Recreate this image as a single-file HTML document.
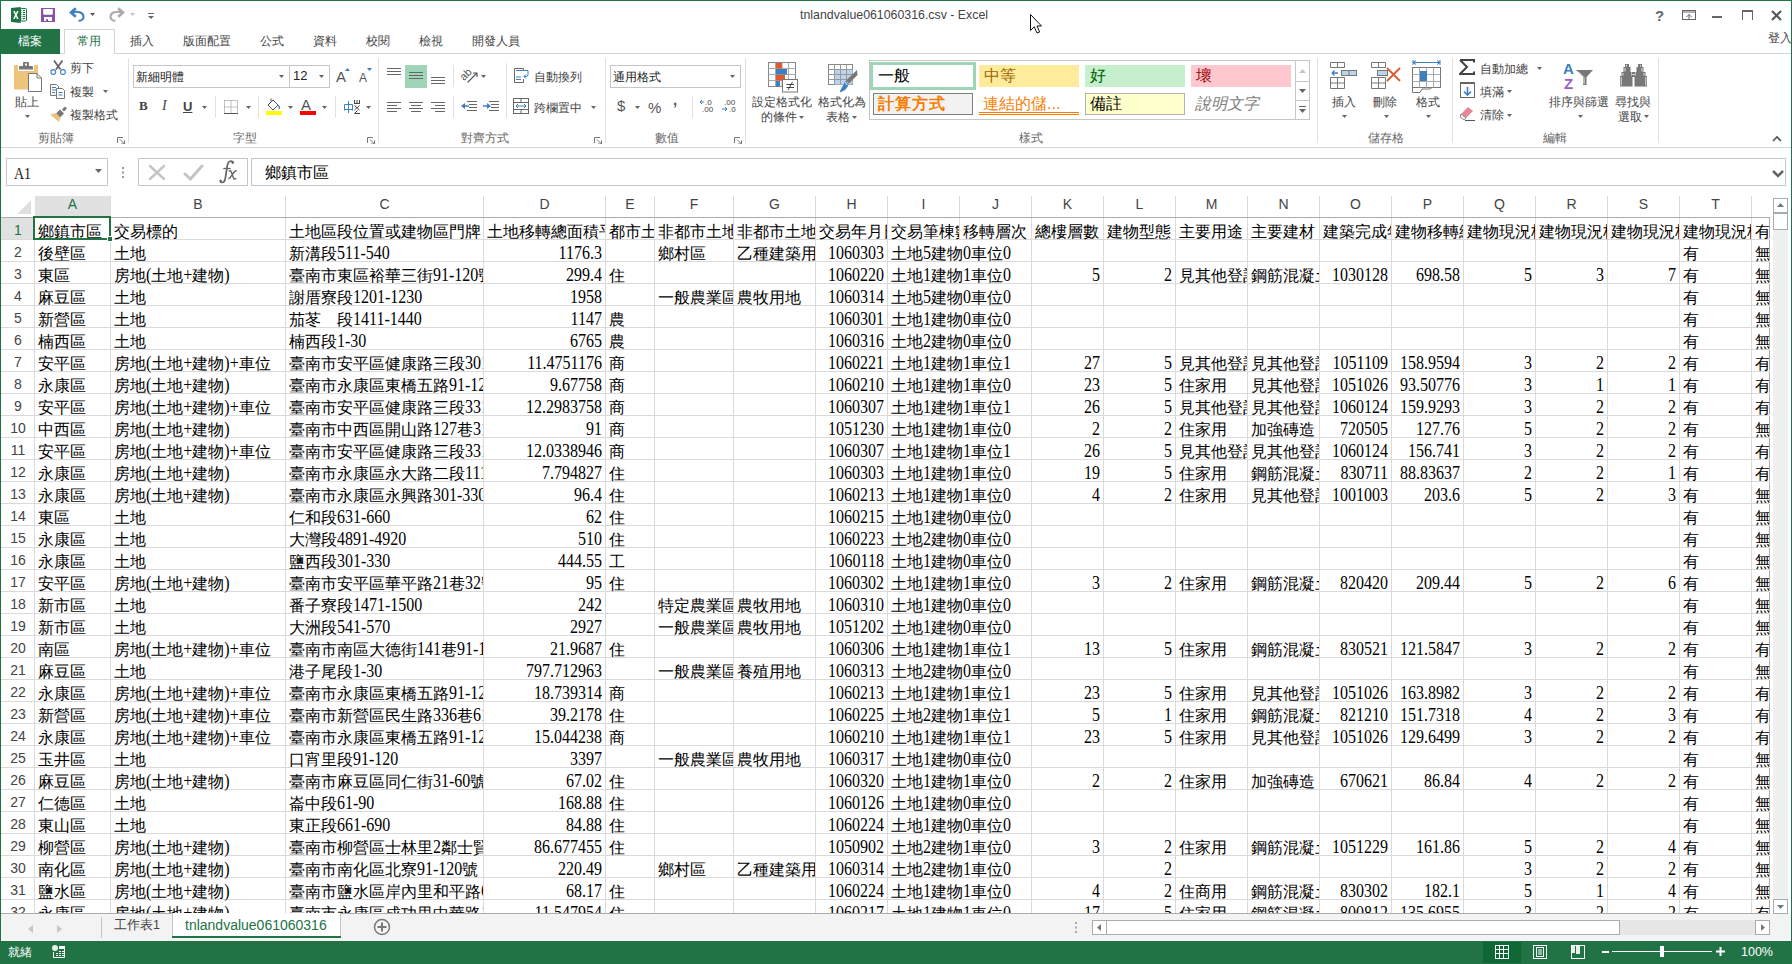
<!DOCTYPE html>
<html><head><meta charset="utf-8"><style>
*{margin:0;padding:0}
html,body{width:1792px;height:964px;overflow:hidden;background:#fff;position:relative;font-family:"Liberation Sans",sans-serif}
.t{position:absolute;white-space:nowrap;line-height:1.2}
.ch{position:absolute;top:194px;height:21px;line-height:21px;text-align:center;font-size:14px}
.rh{position:absolute;left:0;width:34px;height:21px;line-height:21px;text-align:center;font-size:14px}
.c{position:absolute;height:22px;line-height:22px;font-size:16px;font-family:"Liberation Serif",serif;white-space:nowrap;overflow:hidden;padding-left:3px;box-sizing:border-box;color:#000}
.n{text-align:right;padding-left:0}
.d{display:inline-block;transform:scaleY(1.15);transform-origin:0 15px}
.vl{position:absolute;width:1px;height:21px;background:#dadada}
</style></head><body>
<svg style="position:absolute;left:11px;top:7px;" width="17" height="17" viewBox="0 0 17 17"><rect x="9.5" y="1.5" width="6" height="12.5" rx="0.8" fill="#fff" stroke="#217346" stroke-width="1"/><rect x="11.7" y="3.0" width="2.4" height="1.1" fill="#217346"/><rect x="9.5" y="3.0" width="1" height="1.1" fill="#217346"/><rect x="11.7" y="5.0" width="2.4" height="1.1" fill="#217346"/><rect x="9.5" y="5.0" width="1" height="1.1" fill="#217346"/><rect x="11.7" y="7.0" width="2.4" height="1.1" fill="#217346"/><rect x="9.5" y="7.0" width="1" height="1.1" fill="#217346"/><rect x="11.7" y="9.0" width="2.4" height="1.1" fill="#217346"/><rect x="9.5" y="9.0" width="1" height="1.1" fill="#217346"/><rect x="11.7" y="11.0" width="2.4" height="1.1" fill="#217346"/><rect x="9.5" y="11.0" width="1" height="1.1" fill="#217346"/><path d="M0 1L9.8 0V16L0 15Z" fill="#217346"/><path d="M2.2 4L4 8L2.2 12H3.8L4.9 9.6L6 12H7.6L5.8 8L7.6 4H6L4.9 6.4L3.8 4Z" fill="#fff"/></svg>
<svg style="position:absolute;left:41px;top:8px;" width="14" height="14" viewBox="0 0 14 14"><path d="M0 0H14V14H0Z" fill="#8651a8"/><path d="M2.2 1H11.8V5.8Q11.8 6.8 10.8 6.8H3.2Q2.2 6.8 2.2 5.8Z" fill="#fff"/><rect x="3" y="9" width="8" height="4" fill="#fff"/><rect x="5" y="11.2" width="2" height="1.8" fill="#8651a8"/></svg>
<svg style="position:absolute;left:68px;top:6px;" width="18" height="17" viewBox="0 0 18 17"><path d="M3.5 6.5C10 5 15 6 15.5 10.5C15.8 13.5 13 14.8 10.5 14.8" fill="none" stroke="#3d7fc1" stroke-width="2"/><path d="M7.8 2.3L3 6.5L7.8 10.7" fill="none" stroke="#3d7fc1" stroke-width="2.6"/></svg>
<svg style="position:absolute;left:90px;top:13px;" width="5" height="3" viewBox="0 0 5 3"><path d="M0 0H5L2.5 3Z" fill="#555"/></svg>
<svg style="position:absolute;left:108px;top:6px;" width="18" height="17" viewBox="0 0 18 17"><g transform="matrix(-1 0 0 1 18 0)"><path d="M3.5 6.5C10 5 15 6 15.5 10.5C15.8 13.5 13 14.8 10.5 14.8" fill="none" stroke="#aaa" stroke-width="2"/><path d="M7.8 2.3L3 6.5L7.8 10.7" fill="none" stroke="#aaa" stroke-width="2.6"/></g></svg>
<svg style="position:absolute;left:130px;top:13px;" width="5" height="3" viewBox="0 0 5 3"><path d="M0 0H5L2.5 3Z" fill="#c5c5c5"/></svg>
<svg style="position:absolute;left:148px;top:13px;" width="6" height="6" viewBox="0 0 6 6"><path d="M0 0.5H6" stroke="#666"/><path d="M0 3H6L3 6Z" fill="#666"/></svg>
<div class="t" style="left:800px;top:8px;font-size:12.35px;color:#444;">tnlandvalue061060316.csv - Excel</div>
<svg style="position:absolute;left:1030px;top:14px;" width="13" height="21" viewBox="0 0 13 21"><path d="M0.5 0.5V16.5L4.2 12.8L7 19L9.6 18L7 12H11.5Z" fill="#fff" stroke="#111" stroke-width="1" stroke-linejoin="round"/></svg>
<div class="t" style="left:1655px;top:7px;font-size:15px;color:#666;font-weight:bold">?</div>
<svg style="position:absolute;left:1682px;top:10px;" width="14" height="10" viewBox="0 0 14 10"><rect x="0.5" y="0.5" width="13" height="9" fill="none" stroke="#666"/><path d="M0.5 2H13.5" stroke="#666"/><path d="M7 9V4.5M4.5 7L7 4.5L9.5 7" fill="none" stroke="#666"/></svg>
<div style="position:absolute;left:1712px;top:16px;width:10px;height:2px;background:#666"></div>
<svg style="position:absolute;left:1742px;top:10px;" width="11" height="10" viewBox="0 0 11 10"><rect x="0.5" y="0.5" width="10" height="10" fill="none" stroke="#666"/><rect x="0" y="0" width="11" height="2" fill="#666"/></svg>
<svg style="position:absolute;left:1771px;top:10px;" width="11" height="11" viewBox="0 0 11 11"><path d="M1 1L10 10M10 1L1 10" stroke="#555" stroke-width="2"/></svg>
<div class="t" style="left:1768px;top:31px;font-size:12px;color:#444;">登入</div>
<div style="position:absolute;left:1px;top:53px;width:1790px;height:1px;background:#d5d5d5"></div>
<div style="position:absolute;left:0px;top:29px;width:60px;height:25px;background:#217346"></div>
<div class="t" style="left:18px;top:34px;font-size:12px;color:#fff;">檔案</div>
<div style="position:absolute;left:64px;top:29px;width:51px;height:25px;background:#fff;border:1px solid #d5d5d5;border-bottom:none;box-sizing:border-box"></div>
<div class="t" style="left:77px;top:34px;font-size:12px;color:#217346;">常用</div>
<div class="t" style="left:130px;top:34px;font-size:12px;color:#444;">插入</div>
<div class="t" style="left:183px;top:34px;font-size:12px;color:#444;">版面配置</div>
<div class="t" style="left:260px;top:34px;font-size:12px;color:#444;">公式</div>
<div class="t" style="left:313px;top:34px;font-size:12px;color:#444;">資料</div>
<div class="t" style="left:366px;top:34px;font-size:12px;color:#444;">校閱</div>
<div class="t" style="left:419px;top:34px;font-size:12px;color:#444;">檢視</div>
<div class="t" style="left:472px;top:34px;font-size:12px;color:#444;">開發人員</div>
<svg style="position:absolute;left:13px;top:61px;" width="30" height="32" viewBox="0 0 30 32"><path d="M1 5Q1 4 2 4H25V28.5H2Q1 28.5 1 27.5Z" fill="#eec37a"/><rect x="5" y="4" width="16" height="6" fill="#fff"/><path d="M6 8.5V6Q6 5 7 5H10V2Q10 1 11 1H15Q16 1 16 2V5H19Q20 5 20 6V8.5Z" fill="#777"/><rect x="12" y="2.5" width="2" height="2" fill="#fff"/><path d="M15.5 12.5H24L28.5 17V30.5H15.5Z" fill="#fff" stroke="#777"/><path d="M24 12.5V17H28.5" fill="none" stroke="#777"/></svg>
<div class="t" style="left:15px;top:95px;font-size:12px;color:#444;">貼上</div>
<svg style="position:absolute;left:25px;top:115px;" width="5" height="3" viewBox="0 0 5 3"><path d="M0 0H5L2.5 3Z" fill="#666"/></svg>
<svg style="position:absolute;left:50px;top:60px;" width="16" height="16" viewBox="0 0 16 16"><path d="M4 0.5L10.5 9.5M12.5 0.5L6 9.5" stroke="#666" stroke-width="1.8"/><circle cx="3.3" cy="12" r="2.4" fill="#fff" stroke="#3d7fc1" stroke-width="1.1"/><circle cx="12.9" cy="12" r="2.4" fill="#fff" stroke="#3d7fc1" stroke-width="1.1"/></svg>
<div class="t" style="left:70px;top:61px;font-size:12px;color:#444;">剪下</div>
<svg style="position:absolute;left:50px;top:84px;" width="16" height="15" viewBox="0 0 16 15"><path d="M0.5 0.5H6.5L8.5 2.5V11.5H0.5Z" fill="#fff" stroke="#777"/><path d="M6.5 4.5H12.5L14.5 6.5V14.5H6.5Z" fill="#fff" stroke="#777"/><path d="M2 3.5H6M2 6H6M2 8.5H5M8.5 8.5H12.5M8.5 11H12.5" stroke="#3d7fc1"/></svg>
<div class="t" style="left:70px;top:85px;font-size:12px;color:#444;">複製</div>
<svg style="position:absolute;left:103px;top:90px;" width="5" height="3" viewBox="0 0 5 3"><path d="M0 0H5L2.5 3Z" fill="#666"/></svg>
<svg style="position:absolute;left:50px;top:106px;" width="17" height="16" viewBox="0 0 17 16"><path d="M12 3.5L15 0.5L17 2.5L14 5.5Z" fill="#777"/><path d="M6 7.5L10 3.5L14 7.5L10 11.5Z" fill="#777"/><path d="M0 8.5L6 7L10.5 11.5L9 16Z" fill="#e9c27f"/></svg>
<div class="t" style="left:70px;top:108px;font-size:12px;color:#444;">複製格式</div>
<div class="t" style="left:38px;top:131px;font-size:12px;color:#666;">剪貼簿</div>
<svg style="position:absolute;left:117px;top:137px;" width="8" height="7" viewBox="0 0 8 7"><path d="M0.5 6V0.5H6" fill="none" stroke="#777"/><path d="M3 2.5L7.5 7M7.5 3.5V7H4" fill="none" stroke="#777"/></svg>
<div style="position:absolute;left:128px;top:58px;width:1px;height:85px;background:#e1e1e1"></div>
<div style="position:absolute;left:133px;top:65px;width:157px;height:23px;border:1px solid #c6c6c6;box-sizing:border-box;background:#fff"></div>
<div style="position:absolute;left:289px;top:65px;width:41px;height:23px;border:1px solid #c6c6c6;box-sizing:border-box;background:#fff"></div>
<div class="t" style="left:136px;top:70px;font-size:12px;color:#222;">新細明體</div>
<svg style="position:absolute;left:279px;top:75px;" width="5" height="3" viewBox="0 0 5 3"><path d="M0 0H5L2.5 3Z" fill="#666"/></svg>
<div class="t" style="left:293px;top:68px;font-size:13px;color:#222;">12</div>
<svg style="position:absolute;left:319px;top:75px;" width="5" height="3" viewBox="0 0 5 3"><path d="M0 0H5L2.5 3Z" fill="#666"/></svg>
<svg style="position:absolute;left:336px;top:68px;" width="14" height="15" viewBox="0 0 14 15"><text x="0" y="14" font-family="Liberation Sans" font-size="15" fill="#555">A</text><path d="M9 3H14L11.5 0Z" fill="#3d7fc1"/></svg>
<svg style="position:absolute;left:359px;top:68px;" width="13" height="15" viewBox="0 0 13 15"><text x="0" y="14" font-family="Liberation Sans" font-size="12" fill="#555">A</text><path d="M8 0H13L10.5 3Z" fill="#3d7fc1"/></svg>
<div class="t" style="left:139px;top:98px;font-size:13px;color:#444;font-weight:bold;font-family:Liberation Serif">B</div>
<div class="t" style="left:162px;top:98px;font-size:14px;color:#444;font-style:italic;font-family:Liberation Serif">I</div>
<div class="t" style="left:183px;top:99px;font-size:13px;color:#444;font-weight:bold;text-decoration:underline">U</div>
<svg style="position:absolute;left:202px;top:106px;" width="5" height="3" viewBox="0 0 5 3"><path d="M0 0H5L2.5 3Z" fill="#666"/></svg>
<div style="position:absolute;left:215px;top:96px;width:1px;height:22px;background:#e1e1e1"></div>
<svg style="position:absolute;left:224px;top:100px;" width="14" height="14" viewBox="0 0 14 14"><path d="M0.5 0.5H13.5V13.5M0.5 0.5V13.5M7 0.5V13.5M0.5 7H13.5" stroke="#888" stroke-dasharray="1 1" fill="none"/><path d="M0 13.5H14" stroke="#555"/></svg>
<svg style="position:absolute;left:246px;top:106px;" width="5" height="3" viewBox="0 0 5 3"><path d="M0 0H5L2.5 3Z" fill="#666"/></svg>
<div style="position:absolute;left:258px;top:96px;width:1px;height:22px;background:#e1e1e1"></div>
<svg style="position:absolute;left:265px;top:98px;" width="18" height="18" viewBox="0 0 18 18"><path d="M3 7L8 2L13 7L8 12Z" fill="#fff" stroke="#555"/><path d="M6 3.5V0.5" stroke="#555"/><path d="M13 7Q16 9 14 11" fill="#3d7fc1" stroke="#3d7fc1"/><rect x="1" y="13" width="16" height="4" fill="#ffff00"/></svg>
<svg style="position:absolute;left:288px;top:106px;" width="5" height="3" viewBox="0 0 5 3"><path d="M0 0H5L2.5 3Z" fill="#666"/></svg>
<svg style="position:absolute;left:299px;top:98px;" width="18" height="18" viewBox="0 0 18 18"><text x="2" y="12" font-family="Liberation Sans" font-size="15" fill="#555">A</text><rect x="1" y="13" width="16" height="4" fill="#ff0000"/></svg>
<svg style="position:absolute;left:322px;top:106px;" width="5" height="3" viewBox="0 0 5 3"><path d="M0 0H5L2.5 3Z" fill="#666"/></svg>
<div style="position:absolute;left:335px;top:96px;width:1px;height:22px;background:#e1e1e1"></div>
<svg style="position:absolute;left:343px;top:99px;" width="18" height="16" viewBox="0 0 18 16"><path d="M1.5 11.5V5.5H9.5V11.5M1.5 10.5H9.5M5.5 2V14" fill="none" stroke="#3d7fc1" stroke-width="1"/><path d="M11.5 1V4.5M14 1V4.5M16.5 1V4.5M11 4.5H17M11.5 6.5L16.5 11M16.5 6.5L11.5 11M14.5 11.5L11.5 14.5H17" fill="none" stroke="#444" stroke-width="1"/></svg>
<svg style="position:absolute;left:366px;top:106px;" width="5" height="3" viewBox="0 0 5 3"><path d="M0 0H5L2.5 3Z" fill="#666"/></svg>
<div class="t" style="left:233px;top:131px;font-size:12px;color:#666;">字型</div>
<svg style="position:absolute;left:367px;top:137px;" width="8" height="7" viewBox="0 0 8 7"><path d="M0.5 6V0.5H6" fill="none" stroke="#777"/><path d="M3 2.5L7.5 7M7.5 3.5V7H4" fill="none" stroke="#777"/></svg>
<div style="position:absolute;left:378px;top:58px;width:1px;height:85px;background:#e1e1e1"></div>
<div style="position:absolute;left:387px;top:68px;width:14px;height:1px;background:#666"></div><div style="position:absolute;left:387px;top:71px;width:14px;height:1px;background:#666"></div><div style="position:absolute;left:387px;top:74px;width:14px;height:1px;background:#666"></div>
<div style="position:absolute;left:405px;top:65px;width:22px;height:23px;background:#9fd5b7"></div>
<div style="position:absolute;left:409px;top:72px;width:14px;height:1px;background:#666"></div><div style="position:absolute;left:409px;top:75px;width:14px;height:1px;background:#666"></div><div style="position:absolute;left:409px;top:78px;width:14px;height:1px;background:#666"></div>
<div style="position:absolute;left:431px;top:77px;width:14px;height:1px;background:#666"></div><div style="position:absolute;left:431px;top:80px;width:14px;height:1px;background:#666"></div><div style="position:absolute;left:431px;top:83px;width:14px;height:1px;background:#666"></div>
<div style="position:absolute;left:387px;top:102px;width:14px;height:1px;background:#666"></div><div style="position:absolute;left:387px;top:105px;width:10px;height:1px;background:#666"></div><div style="position:absolute;left:387px;top:108px;width:14px;height:1px;background:#666"></div><div style="position:absolute;left:387px;top:111px;width:10px;height:1px;background:#666"></div>
<div style="position:absolute;left:409px;top:102px;width:14px;height:1px;background:#666"></div><div style="position:absolute;left:411px;top:105px;width:10px;height:1px;background:#666"></div><div style="position:absolute;left:409px;top:108px;width:14px;height:1px;background:#666"></div><div style="position:absolute;left:411px;top:111px;width:10px;height:1px;background:#666"></div>
<div style="position:absolute;left:431px;top:102px;width:14px;height:1px;background:#666"></div><div style="position:absolute;left:435px;top:105px;width:10px;height:1px;background:#666"></div><div style="position:absolute;left:431px;top:108px;width:14px;height:1px;background:#666"></div><div style="position:absolute;left:435px;top:111px;width:10px;height:1px;background:#666"></div>
<div style="position:absolute;left:453px;top:65px;width:1px;height:22px;background:#e1e1e1"></div>
<div style="position:absolute;left:453px;top:96px;width:1px;height:22px;background:#e1e1e1"></div>
<svg style="position:absolute;left:460px;top:67px;" width="18" height="17" viewBox="0 0 18 17"><g transform="rotate(-45 6 8)"><text x="0" y="11" font-family="Liberation Sans" font-size="11" fill="#555">ab</text></g><path d="M7.5 15.5L16.5 6.5M13 6H17V10" fill="none" stroke="#555" stroke-width="1.1"/></svg>
<svg style="position:absolute;left:481px;top:75px;" width="5" height="3" viewBox="0 0 5 3"><path d="M0 0H5L2.5 3Z" fill="#666"/></svg>
<svg style="position:absolute;left:461px;top:101px;" width="16" height="11" viewBox="0 0 16 11"><path d="M6 0.5H16M8 3.5H16M8 6.5H16M6 9.5H16" stroke="#666"/><path d="M0 5L4 2V8Z" fill="#3d7fc1"/><path d="M3 5H8" stroke="#3d7fc1" stroke-width="1.5"/></svg>
<svg style="position:absolute;left:483px;top:101px;" width="16" height="11" viewBox="0 0 16 11"><path d="M6 0.5H16M8 3.5H16M8 6.5H16M6 9.5H16" stroke="#666"/><path d="M8 5L4 2V8Z" fill="#3d7fc1"/><path d="M0 5H5" stroke="#3d7fc1" stroke-width="1.5"/></svg>
<div style="position:absolute;left:506px;top:63px;width:1px;height:55px;background:#e1e1e1"></div>
<svg style="position:absolute;left:513px;top:67px;" width="18" height="17" viewBox="0 0 18 17"><path d="M10.5 3V1.5H1.5V15.5H10.5V12" fill="none" stroke="#666"/><path d="M3 3.5H15M3 10H8M3 12.5H8" stroke="#3d7fc1"/><path d="M15 3.5V7.5Q15 9.5 13 9.5H11M13 7.5L11 9.5L13 11.5" fill="none" stroke="#3d7fc1"/></svg>
<div class="t" style="left:534px;top:70px;font-size:12px;color:#444;">自動換列</div>
<svg style="position:absolute;left:513px;top:98px;" width="16" height="16" viewBox="0 0 16 16"><rect x="0.5" y="0.5" width="15" height="15" fill="#fff" stroke="#666"/><path d="M0.5 4.5H15.5M0.5 11.5H15.5M8 0.5V4.5M8 11.5V15.5" stroke="#666"/><path d="M3 8H13M3 8L5 6M3 8L5 10M13 8L11 6M13 8L11 10" stroke="#3d7fc1" fill="none"/></svg>
<div class="t" style="left:534px;top:101px;font-size:12px;color:#444;">跨欄置中</div>
<svg style="position:absolute;left:591px;top:106px;" width="5" height="3" viewBox="0 0 5 3"><path d="M0 0H5L2.5 3Z" fill="#666"/></svg>
<div class="t" style="left:461px;top:131px;font-size:12px;color:#666;">對齊方式</div>
<svg style="position:absolute;left:594px;top:137px;" width="8" height="7" viewBox="0 0 8 7"><path d="M0.5 6V0.5H6" fill="none" stroke="#777"/><path d="M3 2.5L7.5 7M7.5 3.5V7H4" fill="none" stroke="#777"/></svg>
<div style="position:absolute;left:605px;top:58px;width:1px;height:85px;background:#e1e1e1"></div>
<div style="position:absolute;left:610px;top:65px;width:131px;height:23px;border:1px solid #c6c6c6;box-sizing:border-box;background:#fff"></div>
<div class="t" style="left:613px;top:70px;font-size:12px;color:#222;">通用格式</div>
<svg style="position:absolute;left:730px;top:75px;" width="5" height="3" viewBox="0 0 5 3"><path d="M0 0H5L2.5 3Z" fill="#666"/></svg>
<div class="t" style="left:617px;top:97px;font-size:15px;color:#555;">$</div>
<svg style="position:absolute;left:635px;top:106px;" width="5" height="3" viewBox="0 0 5 3"><path d="M0 0H5L2.5 3Z" fill="#666"/></svg>
<div class="t" style="left:648px;top:99px;font-size:15px;color:#555;">%</div>
<div class="t" style="left:673px;top:91px;font-size:15px;color:#555;font-weight:bold">,</div>
<div style="position:absolute;left:692px;top:96px;width:1px;height:22px;background:#e1e1e1"></div>
<svg style="position:absolute;left:699px;top:99px;" width="16" height="14" viewBox="0 0 16 14"><text x="6" y="6" font-family="Liberation Sans" font-size="8" fill="#444">.0</text><text x="3" y="13" font-family="Liberation Sans" font-size="8" fill="#444">.00</text><path d="M1 3H5M1 3L3 1M1 3L3 5" stroke="#3d7fc1" fill="none"/></svg>
<svg style="position:absolute;left:721px;top:99px;" width="16" height="14" viewBox="0 0 16 14"><text x="3" y="6" font-family="Liberation Sans" font-size="8" fill="#444">.00</text><text x="8" y="13" font-family="Liberation Sans" font-size="8" fill="#444">.0</text><path d="M1 10H6M6 10L4 8M6 10L4 12" stroke="#3d7fc1" fill="none"/></svg>
<div class="t" style="left:655px;top:131px;font-size:12px;color:#666;">數值</div>
<svg style="position:absolute;left:734px;top:137px;" width="8" height="7" viewBox="0 0 8 7"><path d="M0.5 6V0.5H6" fill="none" stroke="#777"/><path d="M3 2.5L7.5 7M7.5 3.5V7H4" fill="none" stroke="#777"/></svg>
<div style="position:absolute;left:745px;top:58px;width:1px;height:85px;background:#e1e1e1"></div>
<svg style="position:absolute;left:768px;top:62px;" width="32" height="31" viewBox="0 0 32 31"><rect x="0.5" y="0.5" width="27" height="24" fill="#fff" stroke="#888"/><path d="M7.5 0.5V24.5M14 0.5V24.5M20.5 0.5V24.5M0.5 6.5H27.5M0.5 12.5H27.5M0.5 18.5H27.5" stroke="#aaa"/><rect x="8" y="1" width="6" height="5.5" fill="#e05a2c"/><rect x="8" y="7" width="11" height="5.5" fill="#3d7fc1"/><rect x="8" y="13" width="9" height="5.5" fill="#e05a2c"/><rect x="8" y="19" width="4" height="5.5" fill="#3d7fc1"/><rect x="14.5" y="17.5" width="15" height="12.5" fill="#fff" stroke="#777"/><path d="M18.5 22.5H26M18.5 25.5H26M24.5 20L20 28" stroke="#333" stroke-width="0.9"/></svg>
<div class="t" style="left:752px;top:95px;font-size:12px;color:#444;">設定格式化</div>
<div class="t" style="left:761px;top:110px;font-size:12px;color:#444;">的條件</div>
<svg style="position:absolute;left:799px;top:116px;" width="5" height="3" viewBox="0 0 5 3"><path d="M0 0H5L2.5 3Z" fill="#666"/></svg>
<svg style="position:absolute;left:828px;top:64px;" width="31" height="29" viewBox="0 0 31 29"><rect x="0.5" y="0.5" width="24" height="20" fill="#fff" stroke="#888"/><rect x="6.5" y="5.5" width="18" height="15" fill="#bcd3ee"/><path d="M6.5 0.5V20.5M12.5 0.5V20.5M18.5 0.5V20.5M0.5 5.5H24.5M0.5 10.5H24.5M0.5 15.5H24.5" stroke="#999"/><path d="M29 6L29.5 11L21 19.5L18 16.5Z" fill="#777"/><path d="M17.5 17L20.5 20Q20 25 13 28Q11.5 28.5 12 27Z" fill="#3d7fc1"/><path d="M17 18.5Q19 19.5 19 21" stroke="#fff" stroke-width="1" fill="none"/></svg>
<div class="t" style="left:818px;top:95px;font-size:12px;color:#444;">格式化為</div>
<div class="t" style="left:826px;top:110px;font-size:12px;color:#444;">表格</div>
<svg style="position:absolute;left:852px;top:116px;" width="5" height="3" viewBox="0 0 5 3"><path d="M0 0H5L2.5 3Z" fill="#666"/></svg>
<div style="position:absolute;left:869px;top:60px;width:441px;height:60px;border:1px solid #c6c6c6;box-sizing:border-box;background:#fff"></div>
<div style="position:absolute;left:870px;top:62px;width:106px;height:28px;border:3px solid #9fd5b7;box-sizing:border-box;background:#fff"></div>
<div class="t" style="left:878px;top:66px;font-size:16px;color:#000;">一般</div>
<div style="position:absolute;left:979px;top:65px;width:100px;height:22px;background:#ffeb9c"></div>
<div class="t" style="left:984px;top:66px;font-size:16px;color:#9c6500;">中等</div>
<div style="position:absolute;left:1085px;top:65px;width:100px;height:22px;background:#c6efce"></div>
<div class="t" style="left:1090px;top:66px;font-size:16px;color:#006100;">好</div>
<div style="position:absolute;left:1191px;top:65px;width:100px;height:22px;background:#ffc7ce"></div>
<div class="t" style="left:1196px;top:66px;font-size:16px;color:#9c0006;">壞</div>
<div style="position:absolute;left:873px;top:93px;width:100px;height:22px;background:#f2f2f2;border:1px solid #7f7f7f;box-sizing:border-box"></div>
<div class="t" style="left:878px;top:94px;font-size:16px;color:#fa7d00;font-weight:bold;letter-spacing:1px">計算方式</div>
<div class="t" style="left:983px;top:94px;font-size:16px;color:#fa7d00;">連結的儲...</div>
<div style="position:absolute;left:979px;top:112px;width:100px;height:1px;background:#fa7d00"></div>
<div style="position:absolute;left:979px;top:114px;width:100px;height:1px;background:#fa7d00"></div>
<div style="position:absolute;left:1085px;top:93px;width:100px;height:22px;background:#ffffcc;border:1px solid #b2b2b2;box-sizing:border-box"></div>
<div class="t" style="left:1090px;top:94px;font-size:16px;color:#000;">備註</div>
<div class="t" style="left:1195px;top:94px;font-size:16px;color:#7f7f7f;font-style:italic">說明文字</div>
<div style="position:absolute;left:1295px;top:60px;width:15px;height:60px;border:1px solid #c6c6c6;box-sizing:border-box;background:#fff"></div>
<div style="position:absolute;left:1296px;top:81px;width:13px;height:1px;background:#c6c6c6"></div>
<div style="position:absolute;left:1296px;top:100px;width:13px;height:1px;background:#c6c6c6"></div>
<svg style="position:absolute;left:1299px;top:69px;" width="7" height="4" viewBox="0 0 7 4"><path d="M0 4H7L3.5 0Z" fill="#c6c6c6"/></svg>
<svg style="position:absolute;left:1299px;top:89px;" width="7" height="4" viewBox="0 0 7 4"><path d="M0 0H7L3.5 4Z" fill="#666"/></svg>
<svg style="position:absolute;left:1299px;top:106px;" width="7" height="7" viewBox="0 0 7 7"><path d="M0 0.5H7" stroke="#666"/><path d="M0 3H7L3.5 7Z" fill="#666"/></svg>
<div class="t" style="left:1019px;top:131px;font-size:12px;color:#666;">樣式</div>
<div style="position:absolute;left:1317px;top:58px;width:1px;height:85px;background:#e1e1e1"></div>
<svg style="position:absolute;left:1330px;top:62px;" width="27" height="28" viewBox="0 0 27 28"><path d="M0.5 0.5H14.5V5.5H0.5ZM7.5 0.5V5.5" fill="#fff" stroke="#777"/><path d="M0.5 15.5H14.5V26.5H0.5ZM0.5 21H14.5M7.5 15.5V26.5" fill="#fff" stroke="#777"/><rect x="11.5" y="8.5" width="15" height="5" fill="#bcd3ee" stroke="#777"/><path d="M19 8.5V13.5" stroke="#777"/><path d="M2 11H8M2 11L4.5 8.5M2 11L4.5 13.5" stroke="#3d7fc1" stroke-width="1.4" fill="none"/></svg>
<div class="t" style="left:1332px;top:95px;font-size:12px;color:#444;">插入</div>
<svg style="position:absolute;left:1342px;top:115px;" width="5" height="3" viewBox="0 0 5 3"><path d="M0 0H5L2.5 3Z" fill="#666"/></svg>
<svg style="position:absolute;left:1371px;top:62px;" width="30" height="28" viewBox="0 0 30 28"><path d="M0.5 0.5H14.5V5.5H0.5ZM7.5 0.5V5.5" fill="#fff" stroke="#777"/><path d="M0.5 15.5H14.5V26.5H0.5ZM0.5 21H14.5M7.5 15.5V26.5" fill="#fff" stroke="#777"/><rect x="6.5" y="8.5" width="10" height="5" fill="#bcd3ee" stroke="#777"/><path d="M16 6L29 19M29 6L16 19" stroke="#e05a2c" stroke-width="1.8"/></svg>
<div class="t" style="left:1373px;top:95px;font-size:12px;color:#444;">刪除</div>
<svg style="position:absolute;left:1384px;top:115px;" width="5" height="3" viewBox="0 0 5 3"><path d="M0 0H5L2.5 3Z" fill="#666"/></svg>
<svg style="position:absolute;left:1412px;top:60px;" width="30" height="33" viewBox="0 0 30 33"><path d="M1 2.5H28M1 0V5M28 0V5M1 2.5L4 0.5M1 2.5L4 4.5M28 2.5L25 0.5M28 2.5L25 4.5" stroke="#3d7fc1" fill="none"/><rect x="0.5" y="7.5" width="28" height="20" fill="#fff" stroke="#777"/><path d="M7.5 7.5V27.5M14.5 7.5V27.5M21.5 7.5V27.5M0.5 14.5H28.5M0.5 21.5H28.5" stroke="#aaa"/><rect x="8" y="11" width="7" height="10" fill="#3d7fc1"/><path d="M0.5 27.5V32.5H8L10 29H18L20 27.5" fill="none" stroke="#777"/></svg>
<div class="t" style="left:1416px;top:95px;font-size:12px;color:#444;">格式</div>
<svg style="position:absolute;left:1426px;top:115px;" width="5" height="3" viewBox="0 0 5 3"><path d="M0 0H5L2.5 3Z" fill="#666"/></svg>
<div class="t" style="left:1368px;top:131px;font-size:12px;color:#666;">儲存格</div>
<div style="position:absolute;left:1452px;top:58px;width:1px;height:85px;background:#e1e1e1"></div>
<svg style="position:absolute;left:1459px;top:59px;" width="16" height="16" viewBox="0 0 16 16"><path d="M1 1H15V3.5M1 1L8 8L1 15H15V12.5" fill="none" stroke="#444" stroke-width="2"/></svg>
<div class="t" style="left:1480px;top:62px;font-size:12px;color:#444;">自動加總</div>
<svg style="position:absolute;left:1537px;top:67px;" width="5" height="3" viewBox="0 0 5 3"><path d="M0 0H5L2.5 3Z" fill="#666"/></svg>
<svg style="position:absolute;left:1460px;top:82px;" width="16" height="17" viewBox="0 0 16 17"><rect x="0.5" y="0.5" width="14" height="15" fill="#fff" stroke="#666"/><rect x="0" y="0" width="15" height="2" fill="#666"/><path d="M7.5 5V13M4 9.5L7.5 13L11 9.5" stroke="#3d7fc1" stroke-width="1.6" fill="none"/></svg>
<div class="t" style="left:1480px;top:85px;font-size:12px;color:#444;">填滿</div>
<svg style="position:absolute;left:1507px;top:90px;" width="5" height="3" viewBox="0 0 5 3"><path d="M0 0H5L2.5 3Z" fill="#666"/></svg>
<svg style="position:absolute;left:1460px;top:106px;" width="16" height="15" viewBox="0 0 16 15"><path d="M8 1L13 5L6 12L1 8Z" fill="#e8879a"/><path d="M1 8L6 12L4 14L0 11Z" fill="#fff" stroke="#888"/><path d="M5 14.5H15" stroke="#555"/></svg>
<div class="t" style="left:1480px;top:108px;font-size:12px;color:#444;">清除</div>
<svg style="position:absolute;left:1507px;top:114px;" width="5" height="3" viewBox="0 0 5 3"><path d="M0 0H5L2.5 3Z" fill="#666"/></svg>
<svg style="position:absolute;left:1563px;top:61px;" width="31" height="29" viewBox="0 0 31 29"><text x="0" y="13" font-family="Liberation Sans" font-size="15" font-weight="bold" fill="#3d7fc1">A</text><text x="1" y="28" font-family="Liberation Sans" font-size="15" font-weight="bold" fill="#9c5bc6">Z</text><path d="M13 9H30L23.5 16V24H20V16Z" fill="#777"/><path d="M15 10.5L21 16.5V23" fill="none" stroke="#fff" stroke-width="0.9"/></svg>
<div class="t" style="left:1549px;top:95px;font-size:12px;color:#444;">排序與篩選</div>
<svg style="position:absolute;left:1578px;top:115px;" width="5" height="3" viewBox="0 0 5 3"><path d="M0 0H5L2.5 3Z" fill="#666"/></svg>
<svg style="position:absolute;left:1620px;top:64px;" width="27" height="23" viewBox="0 0 27 23"><path d="M5 0H9V3H10.5V8H11.5V12H12.5V22.5H0V12H1.5V8H3.5V3H5Z" fill="#777"/><path d="M18 0H22V3H23.5V8H25.5V12H27V22.5H14.5V12H15.5V8H16.5V3H18Z" fill="#777"/><rect x="12" y="8" width="3" height="5" fill="#777"/><rect x="12.5" y="10" width="2" height="1" fill="#fff"/><path d="M1.2 13V21.5M25.8 13V21.5M3 9V11.5M24 9V11.5M5 4V7.5M22 4V7.5M6.5 1V2.5M20.5 1V2.5" stroke="#fff" stroke-width="0.8"/></svg>
<div class="t" style="left:1615px;top:95px;font-size:12px;color:#444;">尋找與</div>
<div class="t" style="left:1618px;top:110px;font-size:12px;color:#444;">選取</div>
<svg style="position:absolute;left:1644px;top:115px;" width="5" height="3" viewBox="0 0 5 3"><path d="M0 0H5L2.5 3Z" fill="#666"/></svg>
<div class="t" style="left:1543px;top:131px;font-size:12px;color:#666;">編輯</div>
<div style="position:absolute;left:1658px;top:58px;width:1px;height:85px;background:#e1e1e1"></div>
<svg style="position:absolute;left:1772px;top:135px;" width="10" height="7" viewBox="0 0 10 7"><path d="M1 6L5 2L9 6" fill="none" stroke="#555" stroke-width="1.6"/></svg>
<div style="position:absolute;left:1px;top:147px;width:1790px;height:1px;background:#d5d5d5"></div>
<div style="position:absolute;left:6px;top:158px;width:102px;height:28px;border:1px solid #c6c6c6;box-sizing:border-box;background:#fff"></div>
<div class="t" style="left:14px;top:164px;font-size:14px;color:#222;font-family:Liberation Serif;transform:scaleY(1.22);transform-origin:0 0">A1</div>
<svg style="position:absolute;left:95px;top:169px;" width="7" height="4" viewBox="0 0 7 4"><path d="M0 0H7L3.5 4Z" fill="#666"/></svg>
<svg style="position:absolute;left:122px;top:167px;" width="3" height="11" viewBox="0 0 3 11"><rect x="0" y="0" width="2" height="2" fill="#999"/><rect x="0" y="4.5" width="2" height="2" fill="#999"/><rect x="0" y="9" width="2" height="2" fill="#999"/></svg>
<div style="position:absolute;left:138px;top:158px;width:110px;height:28px;border:1px solid #c6c6c6;box-sizing:border-box;background:#fff"></div>
<svg style="position:absolute;left:148px;top:164px;" width="18" height="17" viewBox="0 0 18 17"><path d="M2 2L16 15M16 2L2 15" stroke="#c4c4c4" stroke-width="2.4" stroke-linecap="round"/></svg>
<svg style="position:absolute;left:183px;top:164px;" width="21" height="17" viewBox="0 0 21 17"><path d="M2 10L7.5 15L19 2" fill="none" stroke="#c4c4c4" stroke-width="3" stroke-linecap="round"/></svg>
<svg style="position:absolute;left:217px;top:159px;" width="22" height="26" viewBox="0 0 22 26"><path d="M16 3.2Q14.5 1.5 12.6 2.4Q10.7 3.4 10.1 8L8.3 19.5Q7.6 23.3 5.2 23.5Q3.6 23.6 3.3 22.2" fill="none" stroke="#666" stroke-width="1.7"/><circle cx="15.8" cy="3.6" r="1.3" fill="#666"/><circle cx="3.6" cy="21.8" r="1.3" fill="#666"/><path d="M6.3 9.5H13.6" stroke="#666" stroke-width="1.3"/><path d="M11.8 12.2Q13.6 10.8 14.4 13.2L16.4 18.8Q17.2 20.9 19.4 19.3M19.8 11.8Q18.5 11.4 17.2 13L13.6 17.8Q12.3 19.9 11.4 19.3" fill="none" stroke="#666" stroke-width="1.4"/></svg>
<div style="position:absolute;left:251px;top:158px;width:1535px;height:28px;border:1px solid #c6c6c6;box-sizing:border-box;background:#fff"></div>
<div class="t" style="left:265px;top:163px;font-size:16px;color:#000;font-family:Liberation Serif">鄉鎮市區</div>
<svg style="position:absolute;left:1772px;top:170px;" width="12" height="8" viewBox="0 0 12 8"><path d="M1 1L6 6L11 1" fill="none" stroke="#666" stroke-width="2.6"/></svg>
<div style="position:absolute;left:0;top:196px;width:1770px;height:717px;overflow:hidden">
<div style="position:absolute;left:0;top:-196px;width:1792px;height:964px">
<div id="colhdr" style="position:absolute;left:0;top:196px;width:1770px;height:21px;background:#fff"></div>
<div style="position:absolute;left:35px;top:196px;width:75px;height:21px;background:#e1e1e1"></div>
<div class="ch" style="left:35px;width:75px;color:#217346">A</div>
<div class="ch" style="left:111px;width:174px;color:#444">B</div>
<div class="ch" style="left:286px;width:197px;color:#444">C</div>
<div class="ch" style="left:484px;width:121px;color:#444">D</div>
<div class="ch" style="left:606px;width:48px;color:#444">E</div>
<div class="ch" style="left:655px;width:78px;color:#444">F</div>
<div class="ch" style="left:734px;width:81px;color:#444">G</div>
<div class="ch" style="left:816px;width:71px;color:#444">H</div>
<div class="ch" style="left:888px;width:71px;color:#444">I</div>
<div class="ch" style="left:960px;width:71px;color:#444">J</div>
<div class="ch" style="left:1032px;width:71px;color:#444">K</div>
<div class="ch" style="left:1104px;width:71px;color:#444">L</div>
<div class="ch" style="left:1176px;width:71px;color:#444">M</div>
<div class="ch" style="left:1248px;width:71px;color:#444">N</div>
<div class="ch" style="left:1320px;width:71px;color:#444">O</div>
<div class="ch" style="left:1392px;width:71px;color:#444">P</div>
<div class="ch" style="left:1464px;width:71px;color:#444">Q</div>
<div class="ch" style="left:1536px;width:71px;color:#444">R</div>
<div class="ch" style="left:1608px;width:71px;color:#444">S</div>
<div class="ch" style="left:1680px;width:71px;color:#444">T</div>
<div class="ch" style="left:1752px;width:71px;color:#444">U</div>
<div style="position:absolute;left:110px;top:196px;width:1px;height:21px;background:#dadada"></div>
<div style="position:absolute;left:285px;top:196px;width:1px;height:21px;background:#dadada"></div>
<div style="position:absolute;left:483px;top:196px;width:1px;height:21px;background:#dadada"></div>
<div style="position:absolute;left:605px;top:196px;width:1px;height:21px;background:#dadada"></div>
<div style="position:absolute;left:654px;top:196px;width:1px;height:21px;background:#dadada"></div>
<div style="position:absolute;left:733px;top:196px;width:1px;height:21px;background:#dadada"></div>
<div style="position:absolute;left:815px;top:196px;width:1px;height:21px;background:#dadada"></div>
<div style="position:absolute;left:887px;top:196px;width:1px;height:21px;background:#dadada"></div>
<div style="position:absolute;left:959px;top:196px;width:1px;height:21px;background:#dadada"></div>
<div style="position:absolute;left:1031px;top:196px;width:1px;height:21px;background:#dadada"></div>
<div style="position:absolute;left:1103px;top:196px;width:1px;height:21px;background:#dadada"></div>
<div style="position:absolute;left:1175px;top:196px;width:1px;height:21px;background:#dadada"></div>
<div style="position:absolute;left:1247px;top:196px;width:1px;height:21px;background:#dadada"></div>
<div style="position:absolute;left:1319px;top:196px;width:1px;height:21px;background:#dadada"></div>
<div style="position:absolute;left:1391px;top:196px;width:1px;height:21px;background:#dadada"></div>
<div style="position:absolute;left:1463px;top:196px;width:1px;height:21px;background:#dadada"></div>
<div style="position:absolute;left:1535px;top:196px;width:1px;height:21px;background:#dadada"></div>
<div style="position:absolute;left:1607px;top:196px;width:1px;height:21px;background:#dadada"></div>
<div style="position:absolute;left:1679px;top:196px;width:1px;height:21px;background:#dadada"></div>
<div style="position:absolute;left:1751px;top:196px;width:1px;height:21px;background:#dadada"></div>
<div style="position:absolute;left:0;top:217px;width:34px;height:696px;background:#fff"></div>
<div style="position:absolute;left:0;top:218px;width:34px;height:21px;background:#e1e1e1"></div>
<div class="rh" style="top:220px;left:1px;color:#217346">1</div>
<div class="rh" style="top:242px;left:1px;color:#444">2</div>
<div class="rh" style="top:264px;left:1px;color:#444">3</div>
<div class="rh" style="top:286px;left:1px;color:#444">4</div>
<div class="rh" style="top:308px;left:1px;color:#444">5</div>
<div class="rh" style="top:330px;left:1px;color:#444">6</div>
<div class="rh" style="top:352px;left:1px;color:#444">7</div>
<div class="rh" style="top:374px;left:1px;color:#444">8</div>
<div class="rh" style="top:396px;left:1px;color:#444">9</div>
<div class="rh" style="top:418px;left:1px;color:#444">10</div>
<div class="rh" style="top:440px;left:1px;color:#444">11</div>
<div class="rh" style="top:462px;left:1px;color:#444">12</div>
<div class="rh" style="top:484px;left:1px;color:#444">13</div>
<div class="rh" style="top:506px;left:1px;color:#444">14</div>
<div class="rh" style="top:528px;left:1px;color:#444">15</div>
<div class="rh" style="top:550px;left:1px;color:#444">16</div>
<div class="rh" style="top:572px;left:1px;color:#444">17</div>
<div class="rh" style="top:594px;left:1px;color:#444">18</div>
<div class="rh" style="top:616px;left:1px;color:#444">19</div>
<div class="rh" style="top:638px;left:1px;color:#444">20</div>
<div class="rh" style="top:660px;left:1px;color:#444">21</div>
<div class="rh" style="top:682px;left:1px;color:#444">22</div>
<div class="rh" style="top:704px;left:1px;color:#444">23</div>
<div class="rh" style="top:726px;left:1px;color:#444">24</div>
<div class="rh" style="top:748px;left:1px;color:#444">25</div>
<div class="rh" style="top:770px;left:1px;color:#444">26</div>
<div class="rh" style="top:792px;left:1px;color:#444">27</div>
<div class="rh" style="top:814px;left:1px;color:#444">28</div>
<div class="rh" style="top:836px;left:1px;color:#444">29</div>
<div class="rh" style="top:858px;left:1px;color:#444">30</div>
<div class="rh" style="top:880px;left:1px;color:#444">31</div>
<div class="rh" style="top:902px;left:1px;color:#444">32</div>
<div style="position:absolute;left:0;top:217px;width:1770px;height:1px;background:#ababab"></div>
<div style="position:absolute;left:0;top:239px;width:1769px;height:1px;background:#dadada"></div>
<div style="position:absolute;left:0;top:261px;width:1769px;height:1px;background:#dadada"></div>
<div style="position:absolute;left:0;top:283px;width:1769px;height:1px;background:#dadada"></div>
<div style="position:absolute;left:0;top:305px;width:1769px;height:1px;background:#dadada"></div>
<div style="position:absolute;left:0;top:327px;width:1769px;height:1px;background:#dadada"></div>
<div style="position:absolute;left:0;top:349px;width:1769px;height:1px;background:#dadada"></div>
<div style="position:absolute;left:0;top:371px;width:1769px;height:1px;background:#dadada"></div>
<div style="position:absolute;left:0;top:393px;width:1769px;height:1px;background:#dadada"></div>
<div style="position:absolute;left:0;top:415px;width:1769px;height:1px;background:#dadada"></div>
<div style="position:absolute;left:0;top:437px;width:1769px;height:1px;background:#dadada"></div>
<div style="position:absolute;left:0;top:459px;width:1769px;height:1px;background:#dadada"></div>
<div style="position:absolute;left:0;top:481px;width:1769px;height:1px;background:#dadada"></div>
<div style="position:absolute;left:0;top:503px;width:1769px;height:1px;background:#dadada"></div>
<div style="position:absolute;left:0;top:525px;width:1769px;height:1px;background:#dadada"></div>
<div style="position:absolute;left:0;top:547px;width:1769px;height:1px;background:#dadada"></div>
<div style="position:absolute;left:0;top:569px;width:1769px;height:1px;background:#dadada"></div>
<div style="position:absolute;left:0;top:591px;width:1769px;height:1px;background:#dadada"></div>
<div style="position:absolute;left:0;top:613px;width:1769px;height:1px;background:#dadada"></div>
<div style="position:absolute;left:0;top:635px;width:1769px;height:1px;background:#dadada"></div>
<div style="position:absolute;left:0;top:657px;width:1769px;height:1px;background:#dadada"></div>
<div style="position:absolute;left:0;top:679px;width:1769px;height:1px;background:#dadada"></div>
<div style="position:absolute;left:0;top:701px;width:1769px;height:1px;background:#dadada"></div>
<div style="position:absolute;left:0;top:723px;width:1769px;height:1px;background:#dadada"></div>
<div style="position:absolute;left:0;top:745px;width:1769px;height:1px;background:#dadada"></div>
<div style="position:absolute;left:0;top:767px;width:1769px;height:1px;background:#dadada"></div>
<div style="position:absolute;left:0;top:789px;width:1769px;height:1px;background:#dadada"></div>
<div style="position:absolute;left:0;top:811px;width:1769px;height:1px;background:#dadada"></div>
<div style="position:absolute;left:0;top:833px;width:1769px;height:1px;background:#dadada"></div>
<div style="position:absolute;left:0;top:855px;width:1769px;height:1px;background:#dadada"></div>
<div style="position:absolute;left:0;top:877px;width:1769px;height:1px;background:#dadada"></div>
<div style="position:absolute;left:0;top:899px;width:1769px;height:1px;background:#dadada"></div>
<div class="c" style="left:35px;top:221px;width:75px">鄉鎮市區</div>
<div class="c" style="left:111px;top:221px;width:174px">交易標的</div>
<div class="c" style="left:286px;top:221px;width:197px">土地區段位置或建物區門牌</div>
<div class="c" style="left:484px;top:221px;width:121px">土地移轉總面積平方公尺</div>
<div class="c" style="left:606px;top:221px;width:48px">都市土地使用分區</div>
<div class="c" style="left:655px;top:221px;width:78px">非都市土地使用分區</div>
<div class="c" style="left:734px;top:221px;width:81px">非都市土地使用編定</div>
<div class="c" style="left:816px;top:221px;width:71px">交易年月日</div>
<div class="c" style="left:888px;top:221px;width:71px">交易筆棟數</div>
<div class="c" style="left:960px;top:221px;width:71px">移轉層次</div>
<div class="c" style="left:1032px;top:221px;width:71px">總樓層數</div>
<div class="c" style="left:1104px;top:221px;width:71px">建物型態</div>
<div class="c" style="left:1176px;top:221px;width:71px">主要用途</div>
<div class="c" style="left:1248px;top:221px;width:71px">主要建材</div>
<div class="c" style="left:1320px;top:221px;width:71px">建築完成年月</div>
<div class="c" style="left:1392px;top:221px;width:71px">建物移轉總面積平方公尺</div>
<div class="c" style="left:1464px;top:221px;width:71px">建物現況格局<span class="d">-</span>房</div>
<div class="c" style="left:1536px;top:221px;width:71px">建物現況格局<span class="d">-</span>廳</div>
<div class="c" style="left:1608px;top:221px;width:71px">建物現況格局<span class="d">-</span>衛</div>
<div class="c" style="left:1680px;top:221px;width:71px">建物現況格局<span class="d">-</span>隔間</div>
<div class="c" style="left:1752px;top:221px;width:17px">有無管理組織</div>
<div class="vl" style="left:34px;top:218px"></div>
<div class="vl" style="left:110px;top:218px"></div>
<div class="vl" style="left:285px;top:218px"></div>
<div class="vl" style="left:483px;top:218px"></div>
<div class="vl" style="left:605px;top:218px"></div>
<div class="vl" style="left:654px;top:218px"></div>
<div class="vl" style="left:733px;top:218px"></div>
<div class="vl" style="left:815px;top:218px"></div>
<div class="vl" style="left:887px;top:218px"></div>
<div class="vl" style="left:959px;top:218px"></div>
<div class="vl" style="left:1031px;top:218px"></div>
<div class="vl" style="left:1103px;top:218px"></div>
<div class="vl" style="left:1175px;top:218px"></div>
<div class="vl" style="left:1247px;top:218px"></div>
<div class="vl" style="left:1319px;top:218px"></div>
<div class="vl" style="left:1391px;top:218px"></div>
<div class="vl" style="left:1463px;top:218px"></div>
<div class="vl" style="left:1535px;top:218px"></div>
<div class="vl" style="left:1607px;top:218px"></div>
<div class="vl" style="left:1679px;top:218px"></div>
<div class="vl" style="left:1751px;top:218px"></div>
<div class="vl" style="left:1769px;top:218px;background:#ababab"></div>
<div class="c" style="left:35px;top:243px;width:75px">後壁區</div>
<div class="c" style="left:111px;top:243px;width:174px">土地</div>
<div class="c" style="left:286px;top:243px;width:197px">新溝段<span class="d">511-540</span></div>
<div class="c n" style="left:484px;top:243px;width:118px"><span class="d">1176.3</span></div>
<div class="c" style="left:655px;top:243px;width:78px">鄉村區</div>
<div class="c" style="left:734px;top:243px;width:81px">乙種建築用地</div>
<div class="c n" style="left:816px;top:243px;width:68px"><span class="d">1060303</span></div>
<div class="c" style="left:888px;top:243px;width:791px">土地<span class="d">5</span>建物<span class="d">0</span>車位<span class="d">0</span></div>
<div class="c" style="left:1680px;top:243px;width:71px">有</div>
<div class="c" style="left:1752px;top:243px;width:17px">無</div>
<div class="vl" style="left:34px;top:240px"></div>
<div class="vl" style="left:110px;top:240px"></div>
<div class="vl" style="left:285px;top:240px"></div>
<div class="vl" style="left:483px;top:240px"></div>
<div class="vl" style="left:605px;top:240px"></div>
<div class="vl" style="left:654px;top:240px"></div>
<div class="vl" style="left:733px;top:240px"></div>
<div class="vl" style="left:815px;top:240px"></div>
<div class="vl" style="left:887px;top:240px"></div>
<div class="vl" style="left:1031px;top:240px"></div>
<div class="vl" style="left:1103px;top:240px"></div>
<div class="vl" style="left:1175px;top:240px"></div>
<div class="vl" style="left:1247px;top:240px"></div>
<div class="vl" style="left:1319px;top:240px"></div>
<div class="vl" style="left:1391px;top:240px"></div>
<div class="vl" style="left:1463px;top:240px"></div>
<div class="vl" style="left:1535px;top:240px"></div>
<div class="vl" style="left:1607px;top:240px"></div>
<div class="vl" style="left:1679px;top:240px"></div>
<div class="vl" style="left:1751px;top:240px"></div>
<div class="vl" style="left:1769px;top:240px;background:#ababab"></div>
<div class="c" style="left:35px;top:265px;width:75px">東區</div>
<div class="c" style="left:111px;top:265px;width:174px">房地<span class="d">(</span>土地<span class="d">+</span>建物<span class="d">)</span></div>
<div class="c" style="left:286px;top:265px;width:197px">臺南市東區裕華三街<span class="d">91-120</span>號</div>
<div class="c n" style="left:484px;top:265px;width:118px"><span class="d">299.4</span></div>
<div class="c" style="left:606px;top:265px;width:209px">住</div>
<div class="c n" style="left:816px;top:265px;width:68px"><span class="d">1060220</span></div>
<div class="c" style="left:888px;top:265px;width:143px">土地<span class="d">1</span>建物<span class="d">1</span>車位<span class="d">0</span></div>
<div class="c n" style="left:1032px;top:265px;width:68px"><span class="d">5</span></div>
<div class="c n" style="left:1104px;top:265px;width:68px"><span class="d">2</span></div>
<div class="c" style="left:1176px;top:265px;width:71px">見其他登記事項</div>
<div class="c" style="left:1248px;top:265px;width:71px">鋼筋混凝土造</div>
<div class="c n" style="left:1320px;top:265px;width:68px"><span class="d">1030128</span></div>
<div class="c n" style="left:1392px;top:265px;width:68px"><span class="d">698.58</span></div>
<div class="c n" style="left:1464px;top:265px;width:68px"><span class="d">5</span></div>
<div class="c n" style="left:1536px;top:265px;width:68px"><span class="d">3</span></div>
<div class="c n" style="left:1608px;top:265px;width:68px"><span class="d">7</span></div>
<div class="c" style="left:1680px;top:265px;width:71px">有</div>
<div class="c" style="left:1752px;top:265px;width:17px">無</div>
<div class="vl" style="left:34px;top:262px"></div>
<div class="vl" style="left:110px;top:262px"></div>
<div class="vl" style="left:285px;top:262px"></div>
<div class="vl" style="left:483px;top:262px"></div>
<div class="vl" style="left:605px;top:262px"></div>
<div class="vl" style="left:654px;top:262px"></div>
<div class="vl" style="left:733px;top:262px"></div>
<div class="vl" style="left:815px;top:262px"></div>
<div class="vl" style="left:887px;top:262px"></div>
<div class="vl" style="left:1031px;top:262px"></div>
<div class="vl" style="left:1103px;top:262px"></div>
<div class="vl" style="left:1175px;top:262px"></div>
<div class="vl" style="left:1247px;top:262px"></div>
<div class="vl" style="left:1319px;top:262px"></div>
<div class="vl" style="left:1391px;top:262px"></div>
<div class="vl" style="left:1463px;top:262px"></div>
<div class="vl" style="left:1535px;top:262px"></div>
<div class="vl" style="left:1607px;top:262px"></div>
<div class="vl" style="left:1679px;top:262px"></div>
<div class="vl" style="left:1751px;top:262px"></div>
<div class="vl" style="left:1769px;top:262px;background:#ababab"></div>
<div class="c" style="left:35px;top:287px;width:75px">麻豆區</div>
<div class="c" style="left:111px;top:287px;width:174px">土地</div>
<div class="c" style="left:286px;top:287px;width:197px">謝厝寮段<span class="d">1201-1230</span></div>
<div class="c n" style="left:484px;top:287px;width:118px"><span class="d">1958</span></div>
<div class="c" style="left:655px;top:287px;width:78px">一般農業區</div>
<div class="c" style="left:734px;top:287px;width:81px">農牧用地</div>
<div class="c n" style="left:816px;top:287px;width:68px"><span class="d">1060314</span></div>
<div class="c" style="left:888px;top:287px;width:791px">土地<span class="d">5</span>建物<span class="d">0</span>車位<span class="d">0</span></div>
<div class="c" style="left:1680px;top:287px;width:71px">有</div>
<div class="c" style="left:1752px;top:287px;width:17px">無</div>
<div class="vl" style="left:34px;top:284px"></div>
<div class="vl" style="left:110px;top:284px"></div>
<div class="vl" style="left:285px;top:284px"></div>
<div class="vl" style="left:483px;top:284px"></div>
<div class="vl" style="left:605px;top:284px"></div>
<div class="vl" style="left:654px;top:284px"></div>
<div class="vl" style="left:733px;top:284px"></div>
<div class="vl" style="left:815px;top:284px"></div>
<div class="vl" style="left:887px;top:284px"></div>
<div class="vl" style="left:1031px;top:284px"></div>
<div class="vl" style="left:1103px;top:284px"></div>
<div class="vl" style="left:1175px;top:284px"></div>
<div class="vl" style="left:1247px;top:284px"></div>
<div class="vl" style="left:1319px;top:284px"></div>
<div class="vl" style="left:1391px;top:284px"></div>
<div class="vl" style="left:1463px;top:284px"></div>
<div class="vl" style="left:1535px;top:284px"></div>
<div class="vl" style="left:1607px;top:284px"></div>
<div class="vl" style="left:1679px;top:284px"></div>
<div class="vl" style="left:1751px;top:284px"></div>
<div class="vl" style="left:1769px;top:284px;background:#ababab"></div>
<div class="c" style="left:35px;top:309px;width:75px">新營區</div>
<div class="c" style="left:111px;top:309px;width:174px">土地</div>
<div class="c" style="left:286px;top:309px;width:197px">茄苳　段<span class="d">1411-1440</span></div>
<div class="c n" style="left:484px;top:309px;width:118px"><span class="d">1147</span></div>
<div class="c" style="left:606px;top:309px;width:209px">農</div>
<div class="c n" style="left:816px;top:309px;width:68px"><span class="d">1060301</span></div>
<div class="c" style="left:888px;top:309px;width:791px">土地<span class="d">1</span>建物<span class="d">0</span>車位<span class="d">0</span></div>
<div class="c" style="left:1680px;top:309px;width:71px">有</div>
<div class="c" style="left:1752px;top:309px;width:17px">無</div>
<div class="vl" style="left:34px;top:306px"></div>
<div class="vl" style="left:110px;top:306px"></div>
<div class="vl" style="left:285px;top:306px"></div>
<div class="vl" style="left:483px;top:306px"></div>
<div class="vl" style="left:605px;top:306px"></div>
<div class="vl" style="left:654px;top:306px"></div>
<div class="vl" style="left:733px;top:306px"></div>
<div class="vl" style="left:815px;top:306px"></div>
<div class="vl" style="left:887px;top:306px"></div>
<div class="vl" style="left:1031px;top:306px"></div>
<div class="vl" style="left:1103px;top:306px"></div>
<div class="vl" style="left:1175px;top:306px"></div>
<div class="vl" style="left:1247px;top:306px"></div>
<div class="vl" style="left:1319px;top:306px"></div>
<div class="vl" style="left:1391px;top:306px"></div>
<div class="vl" style="left:1463px;top:306px"></div>
<div class="vl" style="left:1535px;top:306px"></div>
<div class="vl" style="left:1607px;top:306px"></div>
<div class="vl" style="left:1679px;top:306px"></div>
<div class="vl" style="left:1751px;top:306px"></div>
<div class="vl" style="left:1769px;top:306px;background:#ababab"></div>
<div class="c" style="left:35px;top:331px;width:75px">楠西區</div>
<div class="c" style="left:111px;top:331px;width:174px">土地</div>
<div class="c" style="left:286px;top:331px;width:197px">楠西段<span class="d">1-30</span></div>
<div class="c n" style="left:484px;top:331px;width:118px"><span class="d">6765</span></div>
<div class="c" style="left:606px;top:331px;width:209px">農</div>
<div class="c n" style="left:816px;top:331px;width:68px"><span class="d">1060316</span></div>
<div class="c" style="left:888px;top:331px;width:791px">土地<span class="d">2</span>建物<span class="d">0</span>車位<span class="d">0</span></div>
<div class="c" style="left:1680px;top:331px;width:71px">有</div>
<div class="c" style="left:1752px;top:331px;width:17px">無</div>
<div class="vl" style="left:34px;top:328px"></div>
<div class="vl" style="left:110px;top:328px"></div>
<div class="vl" style="left:285px;top:328px"></div>
<div class="vl" style="left:483px;top:328px"></div>
<div class="vl" style="left:605px;top:328px"></div>
<div class="vl" style="left:654px;top:328px"></div>
<div class="vl" style="left:733px;top:328px"></div>
<div class="vl" style="left:815px;top:328px"></div>
<div class="vl" style="left:887px;top:328px"></div>
<div class="vl" style="left:1031px;top:328px"></div>
<div class="vl" style="left:1103px;top:328px"></div>
<div class="vl" style="left:1175px;top:328px"></div>
<div class="vl" style="left:1247px;top:328px"></div>
<div class="vl" style="left:1319px;top:328px"></div>
<div class="vl" style="left:1391px;top:328px"></div>
<div class="vl" style="left:1463px;top:328px"></div>
<div class="vl" style="left:1535px;top:328px"></div>
<div class="vl" style="left:1607px;top:328px"></div>
<div class="vl" style="left:1679px;top:328px"></div>
<div class="vl" style="left:1751px;top:328px"></div>
<div class="vl" style="left:1769px;top:328px;background:#ababab"></div>
<div class="c" style="left:35px;top:353px;width:75px">安平區</div>
<div class="c" style="left:111px;top:353px;width:174px">房地<span class="d">(</span>土地<span class="d">+</span>建物<span class="d">)+</span>車位</div>
<div class="c" style="left:286px;top:353px;width:197px">臺南市安平區健康路三段<span class="d">301</span></div>
<div class="c n" style="left:484px;top:353px;width:118px"><span class="d">11.4751176</span></div>
<div class="c" style="left:606px;top:353px;width:209px">商</div>
<div class="c n" style="left:816px;top:353px;width:68px"><span class="d">1060221</span></div>
<div class="c" style="left:888px;top:353px;width:143px">土地<span class="d">1</span>建物<span class="d">1</span>車位<span class="d">1</span></div>
<div class="c n" style="left:1032px;top:353px;width:68px"><span class="d">27</span></div>
<div class="c n" style="left:1104px;top:353px;width:68px"><span class="d">5</span></div>
<div class="c" style="left:1176px;top:353px;width:71px">見其他登記事項</div>
<div class="c" style="left:1248px;top:353px;width:71px">見其他登記事項</div>
<div class="c n" style="left:1320px;top:353px;width:68px"><span class="d">1051109</span></div>
<div class="c n" style="left:1392px;top:353px;width:68px"><span class="d">158.9594</span></div>
<div class="c n" style="left:1464px;top:353px;width:68px"><span class="d">3</span></div>
<div class="c n" style="left:1536px;top:353px;width:68px"><span class="d">2</span></div>
<div class="c n" style="left:1608px;top:353px;width:68px"><span class="d">2</span></div>
<div class="c" style="left:1680px;top:353px;width:71px">有</div>
<div class="c" style="left:1752px;top:353px;width:17px">有</div>
<div class="vl" style="left:34px;top:350px"></div>
<div class="vl" style="left:110px;top:350px"></div>
<div class="vl" style="left:285px;top:350px"></div>
<div class="vl" style="left:483px;top:350px"></div>
<div class="vl" style="left:605px;top:350px"></div>
<div class="vl" style="left:654px;top:350px"></div>
<div class="vl" style="left:733px;top:350px"></div>
<div class="vl" style="left:815px;top:350px"></div>
<div class="vl" style="left:887px;top:350px"></div>
<div class="vl" style="left:1031px;top:350px"></div>
<div class="vl" style="left:1103px;top:350px"></div>
<div class="vl" style="left:1175px;top:350px"></div>
<div class="vl" style="left:1247px;top:350px"></div>
<div class="vl" style="left:1319px;top:350px"></div>
<div class="vl" style="left:1391px;top:350px"></div>
<div class="vl" style="left:1463px;top:350px"></div>
<div class="vl" style="left:1535px;top:350px"></div>
<div class="vl" style="left:1607px;top:350px"></div>
<div class="vl" style="left:1679px;top:350px"></div>
<div class="vl" style="left:1751px;top:350px"></div>
<div class="vl" style="left:1769px;top:350px;background:#ababab"></div>
<div class="c" style="left:35px;top:375px;width:75px">永康區</div>
<div class="c" style="left:111px;top:375px;width:174px">房地<span class="d">(</span>土地<span class="d">+</span>建物<span class="d">)</span></div>
<div class="c" style="left:286px;top:375px;width:197px">臺南市永康區東橋五路<span class="d">91-120</span></div>
<div class="c n" style="left:484px;top:375px;width:118px"><span class="d">9.67758</span></div>
<div class="c" style="left:606px;top:375px;width:209px">商</div>
<div class="c n" style="left:816px;top:375px;width:68px"><span class="d">1060210</span></div>
<div class="c" style="left:888px;top:375px;width:143px">土地<span class="d">1</span>建物<span class="d">1</span>車位<span class="d">0</span></div>
<div class="c n" style="left:1032px;top:375px;width:68px"><span class="d">23</span></div>
<div class="c n" style="left:1104px;top:375px;width:68px"><span class="d">5</span></div>
<div class="c" style="left:1176px;top:375px;width:71px">住家用</div>
<div class="c" style="left:1248px;top:375px;width:71px">見其他登記事項</div>
<div class="c n" style="left:1320px;top:375px;width:68px"><span class="d">1051026</span></div>
<div class="c n" style="left:1392px;top:375px;width:68px"><span class="d">93.50776</span></div>
<div class="c n" style="left:1464px;top:375px;width:68px"><span class="d">3</span></div>
<div class="c n" style="left:1536px;top:375px;width:68px"><span class="d">1</span></div>
<div class="c n" style="left:1608px;top:375px;width:68px"><span class="d">1</span></div>
<div class="c" style="left:1680px;top:375px;width:71px">有</div>
<div class="c" style="left:1752px;top:375px;width:17px">有</div>
<div class="vl" style="left:34px;top:372px"></div>
<div class="vl" style="left:110px;top:372px"></div>
<div class="vl" style="left:285px;top:372px"></div>
<div class="vl" style="left:483px;top:372px"></div>
<div class="vl" style="left:605px;top:372px"></div>
<div class="vl" style="left:654px;top:372px"></div>
<div class="vl" style="left:733px;top:372px"></div>
<div class="vl" style="left:815px;top:372px"></div>
<div class="vl" style="left:887px;top:372px"></div>
<div class="vl" style="left:1031px;top:372px"></div>
<div class="vl" style="left:1103px;top:372px"></div>
<div class="vl" style="left:1175px;top:372px"></div>
<div class="vl" style="left:1247px;top:372px"></div>
<div class="vl" style="left:1319px;top:372px"></div>
<div class="vl" style="left:1391px;top:372px"></div>
<div class="vl" style="left:1463px;top:372px"></div>
<div class="vl" style="left:1535px;top:372px"></div>
<div class="vl" style="left:1607px;top:372px"></div>
<div class="vl" style="left:1679px;top:372px"></div>
<div class="vl" style="left:1751px;top:372px"></div>
<div class="vl" style="left:1769px;top:372px;background:#ababab"></div>
<div class="c" style="left:35px;top:397px;width:75px">安平區</div>
<div class="c" style="left:111px;top:397px;width:174px">房地<span class="d">(</span>土地<span class="d">+</span>建物<span class="d">)+</span>車位</div>
<div class="c" style="left:286px;top:397px;width:197px">臺南市安平區健康路三段<span class="d">331</span></div>
<div class="c n" style="left:484px;top:397px;width:118px"><span class="d">12.2983758</span></div>
<div class="c" style="left:606px;top:397px;width:209px">商</div>
<div class="c n" style="left:816px;top:397px;width:68px"><span class="d">1060307</span></div>
<div class="c" style="left:888px;top:397px;width:143px">土地<span class="d">1</span>建物<span class="d">1</span>車位<span class="d">1</span></div>
<div class="c n" style="left:1032px;top:397px;width:68px"><span class="d">26</span></div>
<div class="c n" style="left:1104px;top:397px;width:68px"><span class="d">5</span></div>
<div class="c" style="left:1176px;top:397px;width:71px">見其他登記事項</div>
<div class="c" style="left:1248px;top:397px;width:71px">見其他登記事項</div>
<div class="c n" style="left:1320px;top:397px;width:68px"><span class="d">1060124</span></div>
<div class="c n" style="left:1392px;top:397px;width:68px"><span class="d">159.9293</span></div>
<div class="c n" style="left:1464px;top:397px;width:68px"><span class="d">3</span></div>
<div class="c n" style="left:1536px;top:397px;width:68px"><span class="d">2</span></div>
<div class="c n" style="left:1608px;top:397px;width:68px"><span class="d">2</span></div>
<div class="c" style="left:1680px;top:397px;width:71px">有</div>
<div class="c" style="left:1752px;top:397px;width:17px">有</div>
<div class="vl" style="left:34px;top:394px"></div>
<div class="vl" style="left:110px;top:394px"></div>
<div class="vl" style="left:285px;top:394px"></div>
<div class="vl" style="left:483px;top:394px"></div>
<div class="vl" style="left:605px;top:394px"></div>
<div class="vl" style="left:654px;top:394px"></div>
<div class="vl" style="left:733px;top:394px"></div>
<div class="vl" style="left:815px;top:394px"></div>
<div class="vl" style="left:887px;top:394px"></div>
<div class="vl" style="left:1031px;top:394px"></div>
<div class="vl" style="left:1103px;top:394px"></div>
<div class="vl" style="left:1175px;top:394px"></div>
<div class="vl" style="left:1247px;top:394px"></div>
<div class="vl" style="left:1319px;top:394px"></div>
<div class="vl" style="left:1391px;top:394px"></div>
<div class="vl" style="left:1463px;top:394px"></div>
<div class="vl" style="left:1535px;top:394px"></div>
<div class="vl" style="left:1607px;top:394px"></div>
<div class="vl" style="left:1679px;top:394px"></div>
<div class="vl" style="left:1751px;top:394px"></div>
<div class="vl" style="left:1769px;top:394px;background:#ababab"></div>
<div class="c" style="left:35px;top:419px;width:75px">中西區</div>
<div class="c" style="left:111px;top:419px;width:174px">房地<span class="d">(</span>土地<span class="d">+</span>建物<span class="d">)</span></div>
<div class="c" style="left:286px;top:419px;width:197px">臺南市中西區開山路<span class="d">127</span>巷<span class="d">31</span></div>
<div class="c n" style="left:484px;top:419px;width:118px"><span class="d">91</span></div>
<div class="c" style="left:606px;top:419px;width:209px">商</div>
<div class="c n" style="left:816px;top:419px;width:68px"><span class="d">1051230</span></div>
<div class="c" style="left:888px;top:419px;width:143px">土地<span class="d">1</span>建物<span class="d">1</span>車位<span class="d">0</span></div>
<div class="c n" style="left:1032px;top:419px;width:68px"><span class="d">2</span></div>
<div class="c n" style="left:1104px;top:419px;width:68px"><span class="d">2</span></div>
<div class="c" style="left:1176px;top:419px;width:71px">住家用</div>
<div class="c" style="left:1248px;top:419px;width:71px">加強磚造</div>
<div class="c n" style="left:1320px;top:419px;width:68px"><span class="d">720505</span></div>
<div class="c n" style="left:1392px;top:419px;width:68px"><span class="d">127.76</span></div>
<div class="c n" style="left:1464px;top:419px;width:68px"><span class="d">5</span></div>
<div class="c n" style="left:1536px;top:419px;width:68px"><span class="d">2</span></div>
<div class="c n" style="left:1608px;top:419px;width:68px"><span class="d">2</span></div>
<div class="c" style="left:1680px;top:419px;width:71px">有</div>
<div class="c" style="left:1752px;top:419px;width:17px">無</div>
<div class="vl" style="left:34px;top:416px"></div>
<div class="vl" style="left:110px;top:416px"></div>
<div class="vl" style="left:285px;top:416px"></div>
<div class="vl" style="left:483px;top:416px"></div>
<div class="vl" style="left:605px;top:416px"></div>
<div class="vl" style="left:654px;top:416px"></div>
<div class="vl" style="left:733px;top:416px"></div>
<div class="vl" style="left:815px;top:416px"></div>
<div class="vl" style="left:887px;top:416px"></div>
<div class="vl" style="left:1031px;top:416px"></div>
<div class="vl" style="left:1103px;top:416px"></div>
<div class="vl" style="left:1175px;top:416px"></div>
<div class="vl" style="left:1247px;top:416px"></div>
<div class="vl" style="left:1319px;top:416px"></div>
<div class="vl" style="left:1391px;top:416px"></div>
<div class="vl" style="left:1463px;top:416px"></div>
<div class="vl" style="left:1535px;top:416px"></div>
<div class="vl" style="left:1607px;top:416px"></div>
<div class="vl" style="left:1679px;top:416px"></div>
<div class="vl" style="left:1751px;top:416px"></div>
<div class="vl" style="left:1769px;top:416px;background:#ababab"></div>
<div class="c" style="left:35px;top:441px;width:75px">安平區</div>
<div class="c" style="left:111px;top:441px;width:174px">房地<span class="d">(</span>土地<span class="d">+</span>建物<span class="d">)+</span>車位</div>
<div class="c" style="left:286px;top:441px;width:197px">臺南市安平區健康路三段<span class="d">331</span></div>
<div class="c n" style="left:484px;top:441px;width:118px"><span class="d">12.0338946</span></div>
<div class="c" style="left:606px;top:441px;width:209px">商</div>
<div class="c n" style="left:816px;top:441px;width:68px"><span class="d">1060307</span></div>
<div class="c" style="left:888px;top:441px;width:143px">土地<span class="d">1</span>建物<span class="d">1</span>車位<span class="d">1</span></div>
<div class="c n" style="left:1032px;top:441px;width:68px"><span class="d">26</span></div>
<div class="c n" style="left:1104px;top:441px;width:68px"><span class="d">5</span></div>
<div class="c" style="left:1176px;top:441px;width:71px">見其他登記事項</div>
<div class="c" style="left:1248px;top:441px;width:71px">見其他登記事項</div>
<div class="c n" style="left:1320px;top:441px;width:68px"><span class="d">1060124</span></div>
<div class="c n" style="left:1392px;top:441px;width:68px"><span class="d">156.741</span></div>
<div class="c n" style="left:1464px;top:441px;width:68px"><span class="d">3</span></div>
<div class="c n" style="left:1536px;top:441px;width:68px"><span class="d">2</span></div>
<div class="c n" style="left:1608px;top:441px;width:68px"><span class="d">2</span></div>
<div class="c" style="left:1680px;top:441px;width:71px">有</div>
<div class="c" style="left:1752px;top:441px;width:17px">有</div>
<div class="vl" style="left:34px;top:438px"></div>
<div class="vl" style="left:110px;top:438px"></div>
<div class="vl" style="left:285px;top:438px"></div>
<div class="vl" style="left:483px;top:438px"></div>
<div class="vl" style="left:605px;top:438px"></div>
<div class="vl" style="left:654px;top:438px"></div>
<div class="vl" style="left:733px;top:438px"></div>
<div class="vl" style="left:815px;top:438px"></div>
<div class="vl" style="left:887px;top:438px"></div>
<div class="vl" style="left:1031px;top:438px"></div>
<div class="vl" style="left:1103px;top:438px"></div>
<div class="vl" style="left:1175px;top:438px"></div>
<div class="vl" style="left:1247px;top:438px"></div>
<div class="vl" style="left:1319px;top:438px"></div>
<div class="vl" style="left:1391px;top:438px"></div>
<div class="vl" style="left:1463px;top:438px"></div>
<div class="vl" style="left:1535px;top:438px"></div>
<div class="vl" style="left:1607px;top:438px"></div>
<div class="vl" style="left:1679px;top:438px"></div>
<div class="vl" style="left:1751px;top:438px"></div>
<div class="vl" style="left:1769px;top:438px;background:#ababab"></div>
<div class="c" style="left:35px;top:463px;width:75px">永康區</div>
<div class="c" style="left:111px;top:463px;width:174px">房地<span class="d">(</span>土地<span class="d">+</span>建物<span class="d">)</span></div>
<div class="c" style="left:286px;top:463px;width:197px">臺南市永康區永大路二段<span class="d">111</span></div>
<div class="c n" style="left:484px;top:463px;width:118px"><span class="d">7.794827</span></div>
<div class="c" style="left:606px;top:463px;width:209px">住</div>
<div class="c n" style="left:816px;top:463px;width:68px"><span class="d">1060303</span></div>
<div class="c" style="left:888px;top:463px;width:143px">土地<span class="d">1</span>建物<span class="d">1</span>車位<span class="d">0</span></div>
<div class="c n" style="left:1032px;top:463px;width:68px"><span class="d">19</span></div>
<div class="c n" style="left:1104px;top:463px;width:68px"><span class="d">5</span></div>
<div class="c" style="left:1176px;top:463px;width:71px">住家用</div>
<div class="c" style="left:1248px;top:463px;width:71px">鋼筋混凝土造</div>
<div class="c n" style="left:1320px;top:463px;width:68px"><span class="d">830711</span></div>
<div class="c n" style="left:1392px;top:463px;width:68px"><span class="d">88.83637</span></div>
<div class="c n" style="left:1464px;top:463px;width:68px"><span class="d">2</span></div>
<div class="c n" style="left:1536px;top:463px;width:68px"><span class="d">2</span></div>
<div class="c n" style="left:1608px;top:463px;width:68px"><span class="d">1</span></div>
<div class="c" style="left:1680px;top:463px;width:71px">有</div>
<div class="c" style="left:1752px;top:463px;width:17px">有</div>
<div class="vl" style="left:34px;top:460px"></div>
<div class="vl" style="left:110px;top:460px"></div>
<div class="vl" style="left:285px;top:460px"></div>
<div class="vl" style="left:483px;top:460px"></div>
<div class="vl" style="left:605px;top:460px"></div>
<div class="vl" style="left:654px;top:460px"></div>
<div class="vl" style="left:733px;top:460px"></div>
<div class="vl" style="left:815px;top:460px"></div>
<div class="vl" style="left:887px;top:460px"></div>
<div class="vl" style="left:1031px;top:460px"></div>
<div class="vl" style="left:1103px;top:460px"></div>
<div class="vl" style="left:1175px;top:460px"></div>
<div class="vl" style="left:1247px;top:460px"></div>
<div class="vl" style="left:1319px;top:460px"></div>
<div class="vl" style="left:1391px;top:460px"></div>
<div class="vl" style="left:1463px;top:460px"></div>
<div class="vl" style="left:1535px;top:460px"></div>
<div class="vl" style="left:1607px;top:460px"></div>
<div class="vl" style="left:1679px;top:460px"></div>
<div class="vl" style="left:1751px;top:460px"></div>
<div class="vl" style="left:1769px;top:460px;background:#ababab"></div>
<div class="c" style="left:35px;top:485px;width:75px">永康區</div>
<div class="c" style="left:111px;top:485px;width:174px">房地<span class="d">(</span>土地<span class="d">+</span>建物<span class="d">)</span></div>
<div class="c" style="left:286px;top:485px;width:197px">臺南市永康區永興路<span class="d">301-330</span>號</div>
<div class="c n" style="left:484px;top:485px;width:118px"><span class="d">96.4</span></div>
<div class="c" style="left:606px;top:485px;width:209px">住</div>
<div class="c n" style="left:816px;top:485px;width:68px"><span class="d">1060213</span></div>
<div class="c" style="left:888px;top:485px;width:143px">土地<span class="d">1</span>建物<span class="d">1</span>車位<span class="d">0</span></div>
<div class="c n" style="left:1032px;top:485px;width:68px"><span class="d">4</span></div>
<div class="c n" style="left:1104px;top:485px;width:68px"><span class="d">2</span></div>
<div class="c" style="left:1176px;top:485px;width:71px">住家用</div>
<div class="c" style="left:1248px;top:485px;width:71px">見其他登記事項</div>
<div class="c n" style="left:1320px;top:485px;width:68px"><span class="d">1001003</span></div>
<div class="c n" style="left:1392px;top:485px;width:68px"><span class="d">203.6</span></div>
<div class="c n" style="left:1464px;top:485px;width:68px"><span class="d">5</span></div>
<div class="c n" style="left:1536px;top:485px;width:68px"><span class="d">2</span></div>
<div class="c n" style="left:1608px;top:485px;width:68px"><span class="d">3</span></div>
<div class="c" style="left:1680px;top:485px;width:71px">有</div>
<div class="c" style="left:1752px;top:485px;width:17px">無</div>
<div class="vl" style="left:34px;top:482px"></div>
<div class="vl" style="left:110px;top:482px"></div>
<div class="vl" style="left:285px;top:482px"></div>
<div class="vl" style="left:483px;top:482px"></div>
<div class="vl" style="left:605px;top:482px"></div>
<div class="vl" style="left:654px;top:482px"></div>
<div class="vl" style="left:733px;top:482px"></div>
<div class="vl" style="left:815px;top:482px"></div>
<div class="vl" style="left:887px;top:482px"></div>
<div class="vl" style="left:1031px;top:482px"></div>
<div class="vl" style="left:1103px;top:482px"></div>
<div class="vl" style="left:1175px;top:482px"></div>
<div class="vl" style="left:1247px;top:482px"></div>
<div class="vl" style="left:1319px;top:482px"></div>
<div class="vl" style="left:1391px;top:482px"></div>
<div class="vl" style="left:1463px;top:482px"></div>
<div class="vl" style="left:1535px;top:482px"></div>
<div class="vl" style="left:1607px;top:482px"></div>
<div class="vl" style="left:1679px;top:482px"></div>
<div class="vl" style="left:1751px;top:482px"></div>
<div class="vl" style="left:1769px;top:482px;background:#ababab"></div>
<div class="c" style="left:35px;top:507px;width:75px">東區</div>
<div class="c" style="left:111px;top:507px;width:174px">土地</div>
<div class="c" style="left:286px;top:507px;width:197px">仁和段<span class="d">631-660</span></div>
<div class="c n" style="left:484px;top:507px;width:118px"><span class="d">62</span></div>
<div class="c" style="left:606px;top:507px;width:209px">住</div>
<div class="c n" style="left:816px;top:507px;width:68px"><span class="d">1060215</span></div>
<div class="c" style="left:888px;top:507px;width:791px">土地<span class="d">1</span>建物<span class="d">0</span>車位<span class="d">0</span></div>
<div class="c" style="left:1680px;top:507px;width:71px">有</div>
<div class="c" style="left:1752px;top:507px;width:17px">無</div>
<div class="vl" style="left:34px;top:504px"></div>
<div class="vl" style="left:110px;top:504px"></div>
<div class="vl" style="left:285px;top:504px"></div>
<div class="vl" style="left:483px;top:504px"></div>
<div class="vl" style="left:605px;top:504px"></div>
<div class="vl" style="left:654px;top:504px"></div>
<div class="vl" style="left:733px;top:504px"></div>
<div class="vl" style="left:815px;top:504px"></div>
<div class="vl" style="left:887px;top:504px"></div>
<div class="vl" style="left:1031px;top:504px"></div>
<div class="vl" style="left:1103px;top:504px"></div>
<div class="vl" style="left:1175px;top:504px"></div>
<div class="vl" style="left:1247px;top:504px"></div>
<div class="vl" style="left:1319px;top:504px"></div>
<div class="vl" style="left:1391px;top:504px"></div>
<div class="vl" style="left:1463px;top:504px"></div>
<div class="vl" style="left:1535px;top:504px"></div>
<div class="vl" style="left:1607px;top:504px"></div>
<div class="vl" style="left:1679px;top:504px"></div>
<div class="vl" style="left:1751px;top:504px"></div>
<div class="vl" style="left:1769px;top:504px;background:#ababab"></div>
<div class="c" style="left:35px;top:529px;width:75px">永康區</div>
<div class="c" style="left:111px;top:529px;width:174px">土地</div>
<div class="c" style="left:286px;top:529px;width:197px">大灣段<span class="d">4891-4920</span></div>
<div class="c n" style="left:484px;top:529px;width:118px"><span class="d">510</span></div>
<div class="c" style="left:606px;top:529px;width:209px">住</div>
<div class="c n" style="left:816px;top:529px;width:68px"><span class="d">1060223</span></div>
<div class="c" style="left:888px;top:529px;width:791px">土地<span class="d">2</span>建物<span class="d">0</span>車位<span class="d">0</span></div>
<div class="c" style="left:1680px;top:529px;width:71px">有</div>
<div class="c" style="left:1752px;top:529px;width:17px">無</div>
<div class="vl" style="left:34px;top:526px"></div>
<div class="vl" style="left:110px;top:526px"></div>
<div class="vl" style="left:285px;top:526px"></div>
<div class="vl" style="left:483px;top:526px"></div>
<div class="vl" style="left:605px;top:526px"></div>
<div class="vl" style="left:654px;top:526px"></div>
<div class="vl" style="left:733px;top:526px"></div>
<div class="vl" style="left:815px;top:526px"></div>
<div class="vl" style="left:887px;top:526px"></div>
<div class="vl" style="left:1031px;top:526px"></div>
<div class="vl" style="left:1103px;top:526px"></div>
<div class="vl" style="left:1175px;top:526px"></div>
<div class="vl" style="left:1247px;top:526px"></div>
<div class="vl" style="left:1319px;top:526px"></div>
<div class="vl" style="left:1391px;top:526px"></div>
<div class="vl" style="left:1463px;top:526px"></div>
<div class="vl" style="left:1535px;top:526px"></div>
<div class="vl" style="left:1607px;top:526px"></div>
<div class="vl" style="left:1679px;top:526px"></div>
<div class="vl" style="left:1751px;top:526px"></div>
<div class="vl" style="left:1769px;top:526px;background:#ababab"></div>
<div class="c" style="left:35px;top:551px;width:75px">永康區</div>
<div class="c" style="left:111px;top:551px;width:174px">土地</div>
<div class="c" style="left:286px;top:551px;width:197px">鹽西段<span class="d">301-330</span></div>
<div class="c n" style="left:484px;top:551px;width:118px"><span class="d">444.55</span></div>
<div class="c" style="left:606px;top:551px;width:209px">工</div>
<div class="c n" style="left:816px;top:551px;width:68px"><span class="d">1060118</span></div>
<div class="c" style="left:888px;top:551px;width:791px">土地<span class="d">1</span>建物<span class="d">0</span>車位<span class="d">0</span></div>
<div class="c" style="left:1680px;top:551px;width:71px">有</div>
<div class="c" style="left:1752px;top:551px;width:17px">無</div>
<div class="vl" style="left:34px;top:548px"></div>
<div class="vl" style="left:110px;top:548px"></div>
<div class="vl" style="left:285px;top:548px"></div>
<div class="vl" style="left:483px;top:548px"></div>
<div class="vl" style="left:605px;top:548px"></div>
<div class="vl" style="left:654px;top:548px"></div>
<div class="vl" style="left:733px;top:548px"></div>
<div class="vl" style="left:815px;top:548px"></div>
<div class="vl" style="left:887px;top:548px"></div>
<div class="vl" style="left:1031px;top:548px"></div>
<div class="vl" style="left:1103px;top:548px"></div>
<div class="vl" style="left:1175px;top:548px"></div>
<div class="vl" style="left:1247px;top:548px"></div>
<div class="vl" style="left:1319px;top:548px"></div>
<div class="vl" style="left:1391px;top:548px"></div>
<div class="vl" style="left:1463px;top:548px"></div>
<div class="vl" style="left:1535px;top:548px"></div>
<div class="vl" style="left:1607px;top:548px"></div>
<div class="vl" style="left:1679px;top:548px"></div>
<div class="vl" style="left:1751px;top:548px"></div>
<div class="vl" style="left:1769px;top:548px;background:#ababab"></div>
<div class="c" style="left:35px;top:573px;width:75px">安平區</div>
<div class="c" style="left:111px;top:573px;width:174px">房地<span class="d">(</span>土地<span class="d">+</span>建物<span class="d">)</span></div>
<div class="c" style="left:286px;top:573px;width:197px">臺南市安平區華平路<span class="d">21</span>巷<span class="d">32</span>號</div>
<div class="c n" style="left:484px;top:573px;width:118px"><span class="d">95</span></div>
<div class="c" style="left:606px;top:573px;width:209px">住</div>
<div class="c n" style="left:816px;top:573px;width:68px"><span class="d">1060302</span></div>
<div class="c" style="left:888px;top:573px;width:143px">土地<span class="d">1</span>建物<span class="d">1</span>車位<span class="d">0</span></div>
<div class="c n" style="left:1032px;top:573px;width:68px"><span class="d">3</span></div>
<div class="c n" style="left:1104px;top:573px;width:68px"><span class="d">2</span></div>
<div class="c" style="left:1176px;top:573px;width:71px">住家用</div>
<div class="c" style="left:1248px;top:573px;width:71px">鋼筋混凝土造</div>
<div class="c n" style="left:1320px;top:573px;width:68px"><span class="d">820420</span></div>
<div class="c n" style="left:1392px;top:573px;width:68px"><span class="d">209.44</span></div>
<div class="c n" style="left:1464px;top:573px;width:68px"><span class="d">5</span></div>
<div class="c n" style="left:1536px;top:573px;width:68px"><span class="d">2</span></div>
<div class="c n" style="left:1608px;top:573px;width:68px"><span class="d">6</span></div>
<div class="c" style="left:1680px;top:573px;width:71px">有</div>
<div class="c" style="left:1752px;top:573px;width:17px">無</div>
<div class="vl" style="left:34px;top:570px"></div>
<div class="vl" style="left:110px;top:570px"></div>
<div class="vl" style="left:285px;top:570px"></div>
<div class="vl" style="left:483px;top:570px"></div>
<div class="vl" style="left:605px;top:570px"></div>
<div class="vl" style="left:654px;top:570px"></div>
<div class="vl" style="left:733px;top:570px"></div>
<div class="vl" style="left:815px;top:570px"></div>
<div class="vl" style="left:887px;top:570px"></div>
<div class="vl" style="left:1031px;top:570px"></div>
<div class="vl" style="left:1103px;top:570px"></div>
<div class="vl" style="left:1175px;top:570px"></div>
<div class="vl" style="left:1247px;top:570px"></div>
<div class="vl" style="left:1319px;top:570px"></div>
<div class="vl" style="left:1391px;top:570px"></div>
<div class="vl" style="left:1463px;top:570px"></div>
<div class="vl" style="left:1535px;top:570px"></div>
<div class="vl" style="left:1607px;top:570px"></div>
<div class="vl" style="left:1679px;top:570px"></div>
<div class="vl" style="left:1751px;top:570px"></div>
<div class="vl" style="left:1769px;top:570px;background:#ababab"></div>
<div class="c" style="left:35px;top:595px;width:75px">新市區</div>
<div class="c" style="left:111px;top:595px;width:174px">土地</div>
<div class="c" style="left:286px;top:595px;width:197px">番子寮段<span class="d">1471-1500</span></div>
<div class="c n" style="left:484px;top:595px;width:118px"><span class="d">242</span></div>
<div class="c" style="left:655px;top:595px;width:78px">特定農業區</div>
<div class="c" style="left:734px;top:595px;width:81px">農牧用地</div>
<div class="c n" style="left:816px;top:595px;width:68px"><span class="d">1060310</span></div>
<div class="c" style="left:888px;top:595px;width:791px">土地<span class="d">1</span>建物<span class="d">0</span>車位<span class="d">0</span></div>
<div class="c" style="left:1680px;top:595px;width:71px">有</div>
<div class="c" style="left:1752px;top:595px;width:17px">無</div>
<div class="vl" style="left:34px;top:592px"></div>
<div class="vl" style="left:110px;top:592px"></div>
<div class="vl" style="left:285px;top:592px"></div>
<div class="vl" style="left:483px;top:592px"></div>
<div class="vl" style="left:605px;top:592px"></div>
<div class="vl" style="left:654px;top:592px"></div>
<div class="vl" style="left:733px;top:592px"></div>
<div class="vl" style="left:815px;top:592px"></div>
<div class="vl" style="left:887px;top:592px"></div>
<div class="vl" style="left:1031px;top:592px"></div>
<div class="vl" style="left:1103px;top:592px"></div>
<div class="vl" style="left:1175px;top:592px"></div>
<div class="vl" style="left:1247px;top:592px"></div>
<div class="vl" style="left:1319px;top:592px"></div>
<div class="vl" style="left:1391px;top:592px"></div>
<div class="vl" style="left:1463px;top:592px"></div>
<div class="vl" style="left:1535px;top:592px"></div>
<div class="vl" style="left:1607px;top:592px"></div>
<div class="vl" style="left:1679px;top:592px"></div>
<div class="vl" style="left:1751px;top:592px"></div>
<div class="vl" style="left:1769px;top:592px;background:#ababab"></div>
<div class="c" style="left:35px;top:617px;width:75px">新市區</div>
<div class="c" style="left:111px;top:617px;width:174px">土地</div>
<div class="c" style="left:286px;top:617px;width:197px">大洲段<span class="d">541-570</span></div>
<div class="c n" style="left:484px;top:617px;width:118px"><span class="d">2927</span></div>
<div class="c" style="left:655px;top:617px;width:78px">一般農業區</div>
<div class="c" style="left:734px;top:617px;width:81px">農牧用地</div>
<div class="c n" style="left:816px;top:617px;width:68px"><span class="d">1051202</span></div>
<div class="c" style="left:888px;top:617px;width:791px">土地<span class="d">1</span>建物<span class="d">0</span>車位<span class="d">0</span></div>
<div class="c" style="left:1680px;top:617px;width:71px">有</div>
<div class="c" style="left:1752px;top:617px;width:17px">無</div>
<div class="vl" style="left:34px;top:614px"></div>
<div class="vl" style="left:110px;top:614px"></div>
<div class="vl" style="left:285px;top:614px"></div>
<div class="vl" style="left:483px;top:614px"></div>
<div class="vl" style="left:605px;top:614px"></div>
<div class="vl" style="left:654px;top:614px"></div>
<div class="vl" style="left:733px;top:614px"></div>
<div class="vl" style="left:815px;top:614px"></div>
<div class="vl" style="left:887px;top:614px"></div>
<div class="vl" style="left:1031px;top:614px"></div>
<div class="vl" style="left:1103px;top:614px"></div>
<div class="vl" style="left:1175px;top:614px"></div>
<div class="vl" style="left:1247px;top:614px"></div>
<div class="vl" style="left:1319px;top:614px"></div>
<div class="vl" style="left:1391px;top:614px"></div>
<div class="vl" style="left:1463px;top:614px"></div>
<div class="vl" style="left:1535px;top:614px"></div>
<div class="vl" style="left:1607px;top:614px"></div>
<div class="vl" style="left:1679px;top:614px"></div>
<div class="vl" style="left:1751px;top:614px"></div>
<div class="vl" style="left:1769px;top:614px;background:#ababab"></div>
<div class="c" style="left:35px;top:639px;width:75px">南區</div>
<div class="c" style="left:111px;top:639px;width:174px">房地<span class="d">(</span>土地<span class="d">+</span>建物<span class="d">)+</span>車位</div>
<div class="c" style="left:286px;top:639px;width:197px">臺南市南區大德街<span class="d">141</span>巷<span class="d">91-120</span></div>
<div class="c n" style="left:484px;top:639px;width:118px"><span class="d">21.9687</span></div>
<div class="c" style="left:606px;top:639px;width:209px">住</div>
<div class="c n" style="left:816px;top:639px;width:68px"><span class="d">1060306</span></div>
<div class="c" style="left:888px;top:639px;width:143px">土地<span class="d">1</span>建物<span class="d">1</span>車位<span class="d">1</span></div>
<div class="c n" style="left:1032px;top:639px;width:68px"><span class="d">13</span></div>
<div class="c n" style="left:1104px;top:639px;width:68px"><span class="d">5</span></div>
<div class="c" style="left:1176px;top:639px;width:71px">住家用</div>
<div class="c" style="left:1248px;top:639px;width:71px">鋼筋混凝土造</div>
<div class="c n" style="left:1320px;top:639px;width:68px"><span class="d">830521</span></div>
<div class="c n" style="left:1392px;top:639px;width:68px"><span class="d">121.5847</span></div>
<div class="c n" style="left:1464px;top:639px;width:68px"><span class="d">3</span></div>
<div class="c n" style="left:1536px;top:639px;width:68px"><span class="d">2</span></div>
<div class="c n" style="left:1608px;top:639px;width:68px"><span class="d">2</span></div>
<div class="c" style="left:1680px;top:639px;width:71px">有</div>
<div class="c" style="left:1752px;top:639px;width:17px">有</div>
<div class="vl" style="left:34px;top:636px"></div>
<div class="vl" style="left:110px;top:636px"></div>
<div class="vl" style="left:285px;top:636px"></div>
<div class="vl" style="left:483px;top:636px"></div>
<div class="vl" style="left:605px;top:636px"></div>
<div class="vl" style="left:654px;top:636px"></div>
<div class="vl" style="left:733px;top:636px"></div>
<div class="vl" style="left:815px;top:636px"></div>
<div class="vl" style="left:887px;top:636px"></div>
<div class="vl" style="left:1031px;top:636px"></div>
<div class="vl" style="left:1103px;top:636px"></div>
<div class="vl" style="left:1175px;top:636px"></div>
<div class="vl" style="left:1247px;top:636px"></div>
<div class="vl" style="left:1319px;top:636px"></div>
<div class="vl" style="left:1391px;top:636px"></div>
<div class="vl" style="left:1463px;top:636px"></div>
<div class="vl" style="left:1535px;top:636px"></div>
<div class="vl" style="left:1607px;top:636px"></div>
<div class="vl" style="left:1679px;top:636px"></div>
<div class="vl" style="left:1751px;top:636px"></div>
<div class="vl" style="left:1769px;top:636px;background:#ababab"></div>
<div class="c" style="left:35px;top:661px;width:75px">麻豆區</div>
<div class="c" style="left:111px;top:661px;width:174px">土地</div>
<div class="c" style="left:286px;top:661px;width:197px">港子尾段<span class="d">1-30</span></div>
<div class="c n" style="left:484px;top:661px;width:118px"><span class="d">797.712963</span></div>
<div class="c" style="left:655px;top:661px;width:78px">一般農業區</div>
<div class="c" style="left:734px;top:661px;width:81px">養殖用地</div>
<div class="c n" style="left:816px;top:661px;width:68px"><span class="d">1060313</span></div>
<div class="c" style="left:888px;top:661px;width:791px">土地<span class="d">2</span>建物<span class="d">0</span>車位<span class="d">0</span></div>
<div class="c" style="left:1680px;top:661px;width:71px">有</div>
<div class="c" style="left:1752px;top:661px;width:17px">無</div>
<div class="vl" style="left:34px;top:658px"></div>
<div class="vl" style="left:110px;top:658px"></div>
<div class="vl" style="left:285px;top:658px"></div>
<div class="vl" style="left:483px;top:658px"></div>
<div class="vl" style="left:605px;top:658px"></div>
<div class="vl" style="left:654px;top:658px"></div>
<div class="vl" style="left:733px;top:658px"></div>
<div class="vl" style="left:815px;top:658px"></div>
<div class="vl" style="left:887px;top:658px"></div>
<div class="vl" style="left:1031px;top:658px"></div>
<div class="vl" style="left:1103px;top:658px"></div>
<div class="vl" style="left:1175px;top:658px"></div>
<div class="vl" style="left:1247px;top:658px"></div>
<div class="vl" style="left:1319px;top:658px"></div>
<div class="vl" style="left:1391px;top:658px"></div>
<div class="vl" style="left:1463px;top:658px"></div>
<div class="vl" style="left:1535px;top:658px"></div>
<div class="vl" style="left:1607px;top:658px"></div>
<div class="vl" style="left:1679px;top:658px"></div>
<div class="vl" style="left:1751px;top:658px"></div>
<div class="vl" style="left:1769px;top:658px;background:#ababab"></div>
<div class="c" style="left:35px;top:683px;width:75px">永康區</div>
<div class="c" style="left:111px;top:683px;width:174px">房地<span class="d">(</span>土地<span class="d">+</span>建物<span class="d">)+</span>車位</div>
<div class="c" style="left:286px;top:683px;width:197px">臺南市永康區東橋五路<span class="d">91-120</span></div>
<div class="c n" style="left:484px;top:683px;width:118px"><span class="d">18.739314</span></div>
<div class="c" style="left:606px;top:683px;width:209px">商</div>
<div class="c n" style="left:816px;top:683px;width:68px"><span class="d">1060213</span></div>
<div class="c" style="left:888px;top:683px;width:143px">土地<span class="d">1</span>建物<span class="d">1</span>車位<span class="d">1</span></div>
<div class="c n" style="left:1032px;top:683px;width:68px"><span class="d">23</span></div>
<div class="c n" style="left:1104px;top:683px;width:68px"><span class="d">5</span></div>
<div class="c" style="left:1176px;top:683px;width:71px">住家用</div>
<div class="c" style="left:1248px;top:683px;width:71px">見其他登記事項</div>
<div class="c n" style="left:1320px;top:683px;width:68px"><span class="d">1051026</span></div>
<div class="c n" style="left:1392px;top:683px;width:68px"><span class="d">163.8982</span></div>
<div class="c n" style="left:1464px;top:683px;width:68px"><span class="d">3</span></div>
<div class="c n" style="left:1536px;top:683px;width:68px"><span class="d">2</span></div>
<div class="c n" style="left:1608px;top:683px;width:68px"><span class="d">2</span></div>
<div class="c" style="left:1680px;top:683px;width:71px">有</div>
<div class="c" style="left:1752px;top:683px;width:17px">有</div>
<div class="vl" style="left:34px;top:680px"></div>
<div class="vl" style="left:110px;top:680px"></div>
<div class="vl" style="left:285px;top:680px"></div>
<div class="vl" style="left:483px;top:680px"></div>
<div class="vl" style="left:605px;top:680px"></div>
<div class="vl" style="left:654px;top:680px"></div>
<div class="vl" style="left:733px;top:680px"></div>
<div class="vl" style="left:815px;top:680px"></div>
<div class="vl" style="left:887px;top:680px"></div>
<div class="vl" style="left:1031px;top:680px"></div>
<div class="vl" style="left:1103px;top:680px"></div>
<div class="vl" style="left:1175px;top:680px"></div>
<div class="vl" style="left:1247px;top:680px"></div>
<div class="vl" style="left:1319px;top:680px"></div>
<div class="vl" style="left:1391px;top:680px"></div>
<div class="vl" style="left:1463px;top:680px"></div>
<div class="vl" style="left:1535px;top:680px"></div>
<div class="vl" style="left:1607px;top:680px"></div>
<div class="vl" style="left:1679px;top:680px"></div>
<div class="vl" style="left:1751px;top:680px"></div>
<div class="vl" style="left:1769px;top:680px;background:#ababab"></div>
<div class="c" style="left:35px;top:705px;width:75px">新營區</div>
<div class="c" style="left:111px;top:705px;width:174px">房地<span class="d">(</span>土地<span class="d">+</span>建物<span class="d">)+</span>車位</div>
<div class="c" style="left:286px;top:705px;width:197px">臺南市新營區民生路<span class="d">336</span>巷<span class="d">61</span></div>
<div class="c n" style="left:484px;top:705px;width:118px"><span class="d">39.2178</span></div>
<div class="c" style="left:606px;top:705px;width:209px">住</div>
<div class="c n" style="left:816px;top:705px;width:68px"><span class="d">1060225</span></div>
<div class="c" style="left:888px;top:705px;width:143px">土地<span class="d">2</span>建物<span class="d">1</span>車位<span class="d">1</span></div>
<div class="c n" style="left:1032px;top:705px;width:68px"><span class="d">5</span></div>
<div class="c n" style="left:1104px;top:705px;width:68px"><span class="d">1</span></div>
<div class="c" style="left:1176px;top:705px;width:71px">住家用</div>
<div class="c" style="left:1248px;top:705px;width:71px">鋼筋混凝土造</div>
<div class="c n" style="left:1320px;top:705px;width:68px"><span class="d">821210</span></div>
<div class="c n" style="left:1392px;top:705px;width:68px"><span class="d">151.7318</span></div>
<div class="c n" style="left:1464px;top:705px;width:68px"><span class="d">4</span></div>
<div class="c n" style="left:1536px;top:705px;width:68px"><span class="d">2</span></div>
<div class="c n" style="left:1608px;top:705px;width:68px"><span class="d">3</span></div>
<div class="c" style="left:1680px;top:705px;width:71px">有</div>
<div class="c" style="left:1752px;top:705px;width:17px">有</div>
<div class="vl" style="left:34px;top:702px"></div>
<div class="vl" style="left:110px;top:702px"></div>
<div class="vl" style="left:285px;top:702px"></div>
<div class="vl" style="left:483px;top:702px"></div>
<div class="vl" style="left:605px;top:702px"></div>
<div class="vl" style="left:654px;top:702px"></div>
<div class="vl" style="left:733px;top:702px"></div>
<div class="vl" style="left:815px;top:702px"></div>
<div class="vl" style="left:887px;top:702px"></div>
<div class="vl" style="left:1031px;top:702px"></div>
<div class="vl" style="left:1103px;top:702px"></div>
<div class="vl" style="left:1175px;top:702px"></div>
<div class="vl" style="left:1247px;top:702px"></div>
<div class="vl" style="left:1319px;top:702px"></div>
<div class="vl" style="left:1391px;top:702px"></div>
<div class="vl" style="left:1463px;top:702px"></div>
<div class="vl" style="left:1535px;top:702px"></div>
<div class="vl" style="left:1607px;top:702px"></div>
<div class="vl" style="left:1679px;top:702px"></div>
<div class="vl" style="left:1751px;top:702px"></div>
<div class="vl" style="left:1769px;top:702px;background:#ababab"></div>
<div class="c" style="left:35px;top:727px;width:75px">永康區</div>
<div class="c" style="left:111px;top:727px;width:174px">房地<span class="d">(</span>土地<span class="d">+</span>建物<span class="d">)+</span>車位</div>
<div class="c" style="left:286px;top:727px;width:197px">臺南市永康區東橋五路<span class="d">91-120</span></div>
<div class="c n" style="left:484px;top:727px;width:118px"><span class="d">15.044238</span></div>
<div class="c" style="left:606px;top:727px;width:209px">商</div>
<div class="c n" style="left:816px;top:727px;width:68px"><span class="d">1060210</span></div>
<div class="c" style="left:888px;top:727px;width:143px">土地<span class="d">1</span>建物<span class="d">1</span>車位<span class="d">1</span></div>
<div class="c n" style="left:1032px;top:727px;width:68px"><span class="d">23</span></div>
<div class="c n" style="left:1104px;top:727px;width:68px"><span class="d">5</span></div>
<div class="c" style="left:1176px;top:727px;width:71px">住家用</div>
<div class="c" style="left:1248px;top:727px;width:71px">見其他登記事項</div>
<div class="c n" style="left:1320px;top:727px;width:68px"><span class="d">1051026</span></div>
<div class="c n" style="left:1392px;top:727px;width:68px"><span class="d">129.6499</span></div>
<div class="c n" style="left:1464px;top:727px;width:68px"><span class="d">3</span></div>
<div class="c n" style="left:1536px;top:727px;width:68px"><span class="d">2</span></div>
<div class="c n" style="left:1608px;top:727px;width:68px"><span class="d">2</span></div>
<div class="c" style="left:1680px;top:727px;width:71px">有</div>
<div class="c" style="left:1752px;top:727px;width:17px">有</div>
<div class="vl" style="left:34px;top:724px"></div>
<div class="vl" style="left:110px;top:724px"></div>
<div class="vl" style="left:285px;top:724px"></div>
<div class="vl" style="left:483px;top:724px"></div>
<div class="vl" style="left:605px;top:724px"></div>
<div class="vl" style="left:654px;top:724px"></div>
<div class="vl" style="left:733px;top:724px"></div>
<div class="vl" style="left:815px;top:724px"></div>
<div class="vl" style="left:887px;top:724px"></div>
<div class="vl" style="left:1031px;top:724px"></div>
<div class="vl" style="left:1103px;top:724px"></div>
<div class="vl" style="left:1175px;top:724px"></div>
<div class="vl" style="left:1247px;top:724px"></div>
<div class="vl" style="left:1319px;top:724px"></div>
<div class="vl" style="left:1391px;top:724px"></div>
<div class="vl" style="left:1463px;top:724px"></div>
<div class="vl" style="left:1535px;top:724px"></div>
<div class="vl" style="left:1607px;top:724px"></div>
<div class="vl" style="left:1679px;top:724px"></div>
<div class="vl" style="left:1751px;top:724px"></div>
<div class="vl" style="left:1769px;top:724px;background:#ababab"></div>
<div class="c" style="left:35px;top:749px;width:75px">玉井區</div>
<div class="c" style="left:111px;top:749px;width:174px">土地</div>
<div class="c" style="left:286px;top:749px;width:197px">口宵里段<span class="d">91-120</span></div>
<div class="c n" style="left:484px;top:749px;width:118px"><span class="d">3397</span></div>
<div class="c" style="left:655px;top:749px;width:78px">一般農業區</div>
<div class="c" style="left:734px;top:749px;width:81px">農牧用地</div>
<div class="c n" style="left:816px;top:749px;width:68px"><span class="d">1060317</span></div>
<div class="c" style="left:888px;top:749px;width:791px">土地<span class="d">1</span>建物<span class="d">0</span>車位<span class="d">0</span></div>
<div class="c" style="left:1680px;top:749px;width:71px">有</div>
<div class="c" style="left:1752px;top:749px;width:17px">無</div>
<div class="vl" style="left:34px;top:746px"></div>
<div class="vl" style="left:110px;top:746px"></div>
<div class="vl" style="left:285px;top:746px"></div>
<div class="vl" style="left:483px;top:746px"></div>
<div class="vl" style="left:605px;top:746px"></div>
<div class="vl" style="left:654px;top:746px"></div>
<div class="vl" style="left:733px;top:746px"></div>
<div class="vl" style="left:815px;top:746px"></div>
<div class="vl" style="left:887px;top:746px"></div>
<div class="vl" style="left:1031px;top:746px"></div>
<div class="vl" style="left:1103px;top:746px"></div>
<div class="vl" style="left:1175px;top:746px"></div>
<div class="vl" style="left:1247px;top:746px"></div>
<div class="vl" style="left:1319px;top:746px"></div>
<div class="vl" style="left:1391px;top:746px"></div>
<div class="vl" style="left:1463px;top:746px"></div>
<div class="vl" style="left:1535px;top:746px"></div>
<div class="vl" style="left:1607px;top:746px"></div>
<div class="vl" style="left:1679px;top:746px"></div>
<div class="vl" style="left:1751px;top:746px"></div>
<div class="vl" style="left:1769px;top:746px;background:#ababab"></div>
<div class="c" style="left:35px;top:771px;width:75px">麻豆區</div>
<div class="c" style="left:111px;top:771px;width:174px">房地<span class="d">(</span>土地<span class="d">+</span>建物<span class="d">)</span></div>
<div class="c" style="left:286px;top:771px;width:197px">臺南市麻豆區同仁街<span class="d">31-60</span>號</div>
<div class="c n" style="left:484px;top:771px;width:118px"><span class="d">67.02</span></div>
<div class="c" style="left:606px;top:771px;width:209px">住</div>
<div class="c n" style="left:816px;top:771px;width:68px"><span class="d">1060320</span></div>
<div class="c" style="left:888px;top:771px;width:143px">土地<span class="d">1</span>建物<span class="d">1</span>車位<span class="d">0</span></div>
<div class="c n" style="left:1032px;top:771px;width:68px"><span class="d">2</span></div>
<div class="c n" style="left:1104px;top:771px;width:68px"><span class="d">2</span></div>
<div class="c" style="left:1176px;top:771px;width:71px">住家用</div>
<div class="c" style="left:1248px;top:771px;width:71px">加強磚造</div>
<div class="c n" style="left:1320px;top:771px;width:68px"><span class="d">670621</span></div>
<div class="c n" style="left:1392px;top:771px;width:68px"><span class="d">86.84</span></div>
<div class="c n" style="left:1464px;top:771px;width:68px"><span class="d">4</span></div>
<div class="c n" style="left:1536px;top:771px;width:68px"><span class="d">2</span></div>
<div class="c n" style="left:1608px;top:771px;width:68px"><span class="d">2</span></div>
<div class="c" style="left:1680px;top:771px;width:71px">有</div>
<div class="c" style="left:1752px;top:771px;width:17px">無</div>
<div class="vl" style="left:34px;top:768px"></div>
<div class="vl" style="left:110px;top:768px"></div>
<div class="vl" style="left:285px;top:768px"></div>
<div class="vl" style="left:483px;top:768px"></div>
<div class="vl" style="left:605px;top:768px"></div>
<div class="vl" style="left:654px;top:768px"></div>
<div class="vl" style="left:733px;top:768px"></div>
<div class="vl" style="left:815px;top:768px"></div>
<div class="vl" style="left:887px;top:768px"></div>
<div class="vl" style="left:1031px;top:768px"></div>
<div class="vl" style="left:1103px;top:768px"></div>
<div class="vl" style="left:1175px;top:768px"></div>
<div class="vl" style="left:1247px;top:768px"></div>
<div class="vl" style="left:1319px;top:768px"></div>
<div class="vl" style="left:1391px;top:768px"></div>
<div class="vl" style="left:1463px;top:768px"></div>
<div class="vl" style="left:1535px;top:768px"></div>
<div class="vl" style="left:1607px;top:768px"></div>
<div class="vl" style="left:1679px;top:768px"></div>
<div class="vl" style="left:1751px;top:768px"></div>
<div class="vl" style="left:1769px;top:768px;background:#ababab"></div>
<div class="c" style="left:35px;top:793px;width:75px">仁德區</div>
<div class="c" style="left:111px;top:793px;width:174px">土地</div>
<div class="c" style="left:286px;top:793px;width:197px">崙中段<span class="d">61-90</span></div>
<div class="c n" style="left:484px;top:793px;width:118px"><span class="d">168.88</span></div>
<div class="c" style="left:606px;top:793px;width:209px">住</div>
<div class="c n" style="left:816px;top:793px;width:68px"><span class="d">1060126</span></div>
<div class="c" style="left:888px;top:793px;width:791px">土地<span class="d">1</span>建物<span class="d">0</span>車位<span class="d">0</span></div>
<div class="c" style="left:1680px;top:793px;width:71px">有</div>
<div class="c" style="left:1752px;top:793px;width:17px">無</div>
<div class="vl" style="left:34px;top:790px"></div>
<div class="vl" style="left:110px;top:790px"></div>
<div class="vl" style="left:285px;top:790px"></div>
<div class="vl" style="left:483px;top:790px"></div>
<div class="vl" style="left:605px;top:790px"></div>
<div class="vl" style="left:654px;top:790px"></div>
<div class="vl" style="left:733px;top:790px"></div>
<div class="vl" style="left:815px;top:790px"></div>
<div class="vl" style="left:887px;top:790px"></div>
<div class="vl" style="left:1031px;top:790px"></div>
<div class="vl" style="left:1103px;top:790px"></div>
<div class="vl" style="left:1175px;top:790px"></div>
<div class="vl" style="left:1247px;top:790px"></div>
<div class="vl" style="left:1319px;top:790px"></div>
<div class="vl" style="left:1391px;top:790px"></div>
<div class="vl" style="left:1463px;top:790px"></div>
<div class="vl" style="left:1535px;top:790px"></div>
<div class="vl" style="left:1607px;top:790px"></div>
<div class="vl" style="left:1679px;top:790px"></div>
<div class="vl" style="left:1751px;top:790px"></div>
<div class="vl" style="left:1769px;top:790px;background:#ababab"></div>
<div class="c" style="left:35px;top:815px;width:75px">東山區</div>
<div class="c" style="left:111px;top:815px;width:174px">土地</div>
<div class="c" style="left:286px;top:815px;width:197px">東正段<span class="d">661-690</span></div>
<div class="c n" style="left:484px;top:815px;width:118px"><span class="d">84.88</span></div>
<div class="c" style="left:606px;top:815px;width:209px">住</div>
<div class="c n" style="left:816px;top:815px;width:68px"><span class="d">1060224</span></div>
<div class="c" style="left:888px;top:815px;width:791px">土地<span class="d">1</span>建物<span class="d">0</span>車位<span class="d">0</span></div>
<div class="c" style="left:1680px;top:815px;width:71px">有</div>
<div class="c" style="left:1752px;top:815px;width:17px">無</div>
<div class="vl" style="left:34px;top:812px"></div>
<div class="vl" style="left:110px;top:812px"></div>
<div class="vl" style="left:285px;top:812px"></div>
<div class="vl" style="left:483px;top:812px"></div>
<div class="vl" style="left:605px;top:812px"></div>
<div class="vl" style="left:654px;top:812px"></div>
<div class="vl" style="left:733px;top:812px"></div>
<div class="vl" style="left:815px;top:812px"></div>
<div class="vl" style="left:887px;top:812px"></div>
<div class="vl" style="left:1031px;top:812px"></div>
<div class="vl" style="left:1103px;top:812px"></div>
<div class="vl" style="left:1175px;top:812px"></div>
<div class="vl" style="left:1247px;top:812px"></div>
<div class="vl" style="left:1319px;top:812px"></div>
<div class="vl" style="left:1391px;top:812px"></div>
<div class="vl" style="left:1463px;top:812px"></div>
<div class="vl" style="left:1535px;top:812px"></div>
<div class="vl" style="left:1607px;top:812px"></div>
<div class="vl" style="left:1679px;top:812px"></div>
<div class="vl" style="left:1751px;top:812px"></div>
<div class="vl" style="left:1769px;top:812px;background:#ababab"></div>
<div class="c" style="left:35px;top:837px;width:75px">柳營區</div>
<div class="c" style="left:111px;top:837px;width:174px">房地<span class="d">(</span>土地<span class="d">+</span>建物<span class="d">)</span></div>
<div class="c" style="left:286px;top:837px;width:197px">臺南市柳營區士林里<span class="d">2</span>鄰士賢路</div>
<div class="c n" style="left:484px;top:837px;width:118px"><span class="d">86.677455</span></div>
<div class="c" style="left:606px;top:837px;width:209px">住</div>
<div class="c n" style="left:816px;top:837px;width:68px"><span class="d">1050902</span></div>
<div class="c" style="left:888px;top:837px;width:143px">土地<span class="d">2</span>建物<span class="d">1</span>車位<span class="d">0</span></div>
<div class="c n" style="left:1032px;top:837px;width:68px"><span class="d">3</span></div>
<div class="c n" style="left:1104px;top:837px;width:68px"><span class="d">2</span></div>
<div class="c" style="left:1176px;top:837px;width:71px">住家用</div>
<div class="c" style="left:1248px;top:837px;width:71px">鋼筋混凝土造</div>
<div class="c n" style="left:1320px;top:837px;width:68px"><span class="d">1051229</span></div>
<div class="c n" style="left:1392px;top:837px;width:68px"><span class="d">161.86</span></div>
<div class="c n" style="left:1464px;top:837px;width:68px"><span class="d">5</span></div>
<div class="c n" style="left:1536px;top:837px;width:68px"><span class="d">2</span></div>
<div class="c n" style="left:1608px;top:837px;width:68px"><span class="d">4</span></div>
<div class="c" style="left:1680px;top:837px;width:71px">有</div>
<div class="c" style="left:1752px;top:837px;width:17px">無</div>
<div class="vl" style="left:34px;top:834px"></div>
<div class="vl" style="left:110px;top:834px"></div>
<div class="vl" style="left:285px;top:834px"></div>
<div class="vl" style="left:483px;top:834px"></div>
<div class="vl" style="left:605px;top:834px"></div>
<div class="vl" style="left:654px;top:834px"></div>
<div class="vl" style="left:733px;top:834px"></div>
<div class="vl" style="left:815px;top:834px"></div>
<div class="vl" style="left:887px;top:834px"></div>
<div class="vl" style="left:1031px;top:834px"></div>
<div class="vl" style="left:1103px;top:834px"></div>
<div class="vl" style="left:1175px;top:834px"></div>
<div class="vl" style="left:1247px;top:834px"></div>
<div class="vl" style="left:1319px;top:834px"></div>
<div class="vl" style="left:1391px;top:834px"></div>
<div class="vl" style="left:1463px;top:834px"></div>
<div class="vl" style="left:1535px;top:834px"></div>
<div class="vl" style="left:1607px;top:834px"></div>
<div class="vl" style="left:1679px;top:834px"></div>
<div class="vl" style="left:1751px;top:834px"></div>
<div class="vl" style="left:1769px;top:834px;background:#ababab"></div>
<div class="c" style="left:35px;top:859px;width:75px">南化區</div>
<div class="c" style="left:111px;top:859px;width:174px">房地<span class="d">(</span>土地<span class="d">+</span>建物<span class="d">)</span></div>
<div class="c" style="left:286px;top:859px;width:197px">臺南市南化區北寮<span class="d">91-120</span>號</div>
<div class="c n" style="left:484px;top:859px;width:118px"><span class="d">220.49</span></div>
<div class="c" style="left:655px;top:859px;width:78px">鄉村區</div>
<div class="c" style="left:734px;top:859px;width:81px">乙種建築用地</div>
<div class="c n" style="left:816px;top:859px;width:68px"><span class="d">1060314</span></div>
<div class="c" style="left:888px;top:859px;width:215px">土地<span class="d">2</span>建物<span class="d">1</span>車位<span class="d">0</span></div>
<div class="c n" style="left:1104px;top:859px;width:68px"><span class="d">2</span></div>
<div class="c n" style="left:1464px;top:859px;width:68px"><span class="d">3</span></div>
<div class="c n" style="left:1536px;top:859px;width:68px"><span class="d">2</span></div>
<div class="c n" style="left:1608px;top:859px;width:68px"><span class="d">2</span></div>
<div class="c" style="left:1680px;top:859px;width:71px">有</div>
<div class="c" style="left:1752px;top:859px;width:17px">無</div>
<div class="vl" style="left:34px;top:856px"></div>
<div class="vl" style="left:110px;top:856px"></div>
<div class="vl" style="left:285px;top:856px"></div>
<div class="vl" style="left:483px;top:856px"></div>
<div class="vl" style="left:605px;top:856px"></div>
<div class="vl" style="left:654px;top:856px"></div>
<div class="vl" style="left:733px;top:856px"></div>
<div class="vl" style="left:815px;top:856px"></div>
<div class="vl" style="left:887px;top:856px"></div>
<div class="vl" style="left:1031px;top:856px"></div>
<div class="vl" style="left:1103px;top:856px"></div>
<div class="vl" style="left:1175px;top:856px"></div>
<div class="vl" style="left:1247px;top:856px"></div>
<div class="vl" style="left:1319px;top:856px"></div>
<div class="vl" style="left:1391px;top:856px"></div>
<div class="vl" style="left:1463px;top:856px"></div>
<div class="vl" style="left:1535px;top:856px"></div>
<div class="vl" style="left:1607px;top:856px"></div>
<div class="vl" style="left:1679px;top:856px"></div>
<div class="vl" style="left:1751px;top:856px"></div>
<div class="vl" style="left:1769px;top:856px;background:#ababab"></div>
<div class="c" style="left:35px;top:881px;width:75px">鹽水區</div>
<div class="c" style="left:111px;top:881px;width:174px">房地<span class="d">(</span>土地<span class="d">+</span>建物<span class="d">)</span></div>
<div class="c" style="left:286px;top:881px;width:197px">臺南市鹽水區岸內里和平路<span class="d">61</span></div>
<div class="c n" style="left:484px;top:881px;width:118px"><span class="d">68.17</span></div>
<div class="c" style="left:606px;top:881px;width:209px">住</div>
<div class="c n" style="left:816px;top:881px;width:68px"><span class="d">1060224</span></div>
<div class="c" style="left:888px;top:881px;width:143px">土地<span class="d">1</span>建物<span class="d">1</span>車位<span class="d">0</span></div>
<div class="c n" style="left:1032px;top:881px;width:68px"><span class="d">4</span></div>
<div class="c n" style="left:1104px;top:881px;width:68px"><span class="d">2</span></div>
<div class="c" style="left:1176px;top:881px;width:71px">住商用</div>
<div class="c" style="left:1248px;top:881px;width:71px">鋼筋混凝土造</div>
<div class="c n" style="left:1320px;top:881px;width:68px"><span class="d">830302</span></div>
<div class="c n" style="left:1392px;top:881px;width:68px"><span class="d">182.1</span></div>
<div class="c n" style="left:1464px;top:881px;width:68px"><span class="d">5</span></div>
<div class="c n" style="left:1536px;top:881px;width:68px"><span class="d">1</span></div>
<div class="c n" style="left:1608px;top:881px;width:68px"><span class="d">4</span></div>
<div class="c" style="left:1680px;top:881px;width:71px">有</div>
<div class="c" style="left:1752px;top:881px;width:17px">無</div>
<div class="vl" style="left:34px;top:878px"></div>
<div class="vl" style="left:110px;top:878px"></div>
<div class="vl" style="left:285px;top:878px"></div>
<div class="vl" style="left:483px;top:878px"></div>
<div class="vl" style="left:605px;top:878px"></div>
<div class="vl" style="left:654px;top:878px"></div>
<div class="vl" style="left:733px;top:878px"></div>
<div class="vl" style="left:815px;top:878px"></div>
<div class="vl" style="left:887px;top:878px"></div>
<div class="vl" style="left:1031px;top:878px"></div>
<div class="vl" style="left:1103px;top:878px"></div>
<div class="vl" style="left:1175px;top:878px"></div>
<div class="vl" style="left:1247px;top:878px"></div>
<div class="vl" style="left:1319px;top:878px"></div>
<div class="vl" style="left:1391px;top:878px"></div>
<div class="vl" style="left:1463px;top:878px"></div>
<div class="vl" style="left:1535px;top:878px"></div>
<div class="vl" style="left:1607px;top:878px"></div>
<div class="vl" style="left:1679px;top:878px"></div>
<div class="vl" style="left:1751px;top:878px"></div>
<div class="vl" style="left:1769px;top:878px;background:#ababab"></div>
<div class="c" style="left:35px;top:903px;width:75px">永康區</div>
<div class="c" style="left:111px;top:903px;width:174px">房地<span class="d">(</span>土地<span class="d">+</span>建物<span class="d">)</span></div>
<div class="c" style="left:286px;top:903px;width:197px">臺南市永康區成功里中華路<span class="d">1</span>段</div>
<div class="c n" style="left:484px;top:903px;width:118px"><span class="d">11.547954</span></div>
<div class="c" style="left:606px;top:903px;width:209px">住</div>
<div class="c n" style="left:816px;top:903px;width:68px"><span class="d">1060217</span></div>
<div class="c" style="left:888px;top:903px;width:143px">土地<span class="d">1</span>建物<span class="d">1</span>車位<span class="d">0</span></div>
<div class="c n" style="left:1032px;top:903px;width:68px"><span class="d">17</span></div>
<div class="c n" style="left:1104px;top:903px;width:68px"><span class="d">5</span></div>
<div class="c" style="left:1176px;top:903px;width:71px">住家用</div>
<div class="c" style="left:1248px;top:903px;width:71px">鋼筋混凝土造</div>
<div class="c n" style="left:1320px;top:903px;width:68px"><span class="d">800812</span></div>
<div class="c n" style="left:1392px;top:903px;width:68px"><span class="d">135.6955</span></div>
<div class="c n" style="left:1464px;top:903px;width:68px"><span class="d">3</span></div>
<div class="c n" style="left:1536px;top:903px;width:68px"><span class="d">2</span></div>
<div class="c n" style="left:1608px;top:903px;width:68px"><span class="d">2</span></div>
<div class="c" style="left:1680px;top:903px;width:71px">有</div>
<div class="c" style="left:1752px;top:903px;width:17px">有</div>
<div class="vl" style="left:34px;top:900px"></div>
<div class="vl" style="left:110px;top:900px"></div>
<div class="vl" style="left:285px;top:900px"></div>
<div class="vl" style="left:483px;top:900px"></div>
<div class="vl" style="left:605px;top:900px"></div>
<div class="vl" style="left:654px;top:900px"></div>
<div class="vl" style="left:733px;top:900px"></div>
<div class="vl" style="left:815px;top:900px"></div>
<div class="vl" style="left:887px;top:900px"></div>
<div class="vl" style="left:1031px;top:900px"></div>
<div class="vl" style="left:1103px;top:900px"></div>
<div class="vl" style="left:1175px;top:900px"></div>
<div class="vl" style="left:1247px;top:900px"></div>
<div class="vl" style="left:1319px;top:900px"></div>
<div class="vl" style="left:1391px;top:900px"></div>
<div class="vl" style="left:1463px;top:900px"></div>
<div class="vl" style="left:1535px;top:900px"></div>
<div class="vl" style="left:1607px;top:900px"></div>
<div class="vl" style="left:1679px;top:900px"></div>
<div class="vl" style="left:1751px;top:900px"></div>
<div class="vl" style="left:1769px;top:900px;background:#ababab"></div>
<div style="position:absolute;left:33px;top:216px;width:78px;height:24px;border:2px solid #217346;box-sizing:border-box"></div>
<div style="position:absolute;left:107px;top:236px;width:6px;height:6px;background:#217346;border:1px solid #fff;box-sizing:border-box"></div>
<svg style="position:absolute;left:17px;top:200px" width="14" height="14"><path d="M14 0V14H0Z" fill="#dfdfdf"/></svg>
</div></div>
<div style="position:absolute;left:1770px;top:196px;width:21px;height:717px;background:#fff"></div>
<div style="position:absolute;left:1773px;top:229px;width:15px;height:671px;background:#f0f0f0"></div>
<div style="position:absolute;left:1773px;top:198px;width:15px;height:15px;border:1px solid #ababab;box-sizing:border-box;background:#fff"></div>
<svg style="position:absolute;left:1777px;top:203px;" width="7" height="4" viewBox="0 0 7 4"><path d="M0 4H7L3.5 0Z" fill="#777"/></svg>
<div style="position:absolute;left:1773px;top:213px;width:15px;height:17px;border:1px solid #ababab;box-sizing:border-box;background:#fff"></div>
<div style="position:absolute;left:1px;top:913px;width:1790px;height:28px;background:#f3f3f3"></div>
<div style="position:absolute;left:1px;top:913px;width:1769px;height:1px;background:#ababab"></div>
<svg style="position:absolute;left:28px;top:925px;" width="5" height="8" viewBox="0 0 5 8"><path d="M5 0V8L0 4Z" fill="#c6c6c6"/></svg>
<svg style="position:absolute;left:57px;top:925px;" width="5" height="8" viewBox="0 0 5 8"><path d="M0 0V8L5 4Z" fill="#c6c6c6"/></svg>
<div style="position:absolute;left:101px;top:917px;width:1px;height:21px;background:#c6c6c6"></div>
<div class="t" style="left:114px;top:918px;font-size:12.5px;color:#444;">工作表1</div>
<div style="position:absolute;left:172px;top:913px;width:169px;height:25px;background:#fff;border-left:1px solid #c6c6c6;border-right:1px solid #c6c6c6;box-sizing:border-box"></div>
<div style="position:absolute;left:172px;top:936px;width:169px;height:2px;background:#217346"></div>
<div class="t" style="left:185px;top:917px;font-size:14px;color:#217346;">tnlandvalue061060316</div>
<svg style="position:absolute;left:373px;top:918px;" width="18" height="18" viewBox="0 0 18 18"><circle cx="9" cy="9" r="7.5" fill="none" stroke="#777" stroke-width="1.5"/><path d="M9 4.5V13.5M4.5 9H13.5" stroke="#777" stroke-width="2"/></svg>
<svg style="position:absolute;left:1075px;top:922px;" width="3" height="11" viewBox="0 0 3 11"><rect x="0" y="0" width="2" height="2" fill="#aaa"/><rect x="0" y="4.5" width="2" height="2" fill="#aaa"/><rect x="0" y="9" width="2" height="2" fill="#aaa"/></svg>
<div style="position:absolute;left:1092px;top:920px;width:678px;height:15px;background:#e6e6e6"></div>
<div style="position:absolute;left:1092px;top:920px;width:15px;height:15px;border:1px solid #ababab;box-sizing:border-box;background:#fff"></div>
<svg style="position:absolute;left:1097px;top:924px;" width="4" height="7" viewBox="0 0 4 7"><path d="M4 0V7L0 3.5Z" fill="#777"/></svg>
<div style="position:absolute;left:1106px;top:920px;width:514px;height:15px;border:1px solid #ababab;box-sizing:border-box;background:#fff"></div>
<div style="position:absolute;left:1755px;top:920px;width:15px;height:15px;border:1px solid #ababab;box-sizing:border-box;background:#fff"></div>
<svg style="position:absolute;left:1761px;top:924px;" width="4" height="7" viewBox="0 0 4 7"><path d="M0 0V7L4 3.5Z" fill="#777"/></svg>
<div style="position:absolute;left:1773px;top:899px;width:15px;height:15px;border:1px solid #ababab;box-sizing:border-box;background:#fff"></div>
<svg style="position:absolute;left:1777px;top:905px;" width="7" height="4" viewBox="0 0 7 4"><path d="M0 0H7L3.5 4Z" fill="#777"/></svg>
<div style="position:absolute;left:0px;top:941px;width:1792px;height:23px;background:#217346"></div>
<div class="t" style="left:8px;top:945px;font-size:12px;color:#fff;">就緒</div>
<svg style="position:absolute;left:51px;top:944px;" width="16" height="15" viewBox="0 0 16 15"><path d="M2.5 8V13.5H13.5V2" fill="none" stroke="#fff" stroke-width="1"/><rect x="8" y="2" width="6" height="3" fill="#fff"/><circle cx="4" cy="4" r="3" fill="#e8f0ea"/><rect x="8" y="7" width="2" height="1" fill="#fff"/><rect x="11" y="7" width="2" height="1" fill="#fff"/><rect x="5" y="9" width="2" height="1" fill="#fff"/><rect x="8" y="9" width="2" height="1" fill="#fff"/><rect x="11" y="9" width="2" height="1" fill="#fff"/><rect x="5" y="11" width="2" height="1" fill="#fff"/><rect x="8" y="11" width="2" height="1" fill="#fff"/><rect x="11" y="11" width="2" height="1" fill="#fff"/></svg>
<div style="position:absolute;left:1483px;top:942px;width:38px;height:21px;background:#0f6735"></div>
<svg style="position:absolute;left:1495px;top:945px;" width="14" height="14" viewBox="0 0 14 14"><rect x="0.5" y="0.5" width="13" height="13" fill="none" stroke="#fff"/><path d="M4.5 0.5V13.5M8.5 0.5V13.5M0.5 4.5H13.5M0.5 8.5H13.5" stroke="#fff"/></svg>
<svg style="position:absolute;left:1533px;top:945px;" width="15" height="14" viewBox="0 0 15 14"><rect x="0.5" y="0.5" width="13" height="13" fill="none" stroke="#fff"/><rect x="3.5" y="2.5" width="7" height="9" fill="none" stroke="#fff"/><path d="M5 5H9M5 7H9M5 9H9" stroke="#fff"/></svg>
<svg style="position:absolute;left:1571px;top:945px;" width="15" height="14" viewBox="0 0 15 14"><rect x="0.5" y="0.5" width="13" height="13" fill="none" stroke="#fff"/><rect x="1" y="1" width="3" height="7" fill="#e8f0ea"/><rect x="5" y="1" width="4" height="8" fill="#e8f0ea"/></svg>
<div style="position:absolute;left:1602px;top:951px;width:7px;height:2px;background:#fff"></div>
<div style="position:absolute;left:1612px;top:951px;width:100px;height:1px;background:#fff"></div>
<div style="position:absolute;left:1660px;top:946px;width:4px;height:11px;background:#fff"></div>
<svg style="position:absolute;left:1716px;top:947px;" width="9" height="9" viewBox="0 0 9 9"><path d="M4.5 0V9M0 4.5H9" stroke="#fff" stroke-width="2"/></svg>
<div class="t" style="left:1741px;top:945px;font-size:12.5px;color:#fff;">100%</div>
<div style="position:absolute;left:0;top:0;width:1792px;height:1px;background:#217346"></div><div style="position:absolute;left:0;top:0;width:1px;height:941px;background:#217346"></div><div style="position:absolute;left:1791px;top:0;width:1px;height:941px;background:#217346"></div>
</body></html>
